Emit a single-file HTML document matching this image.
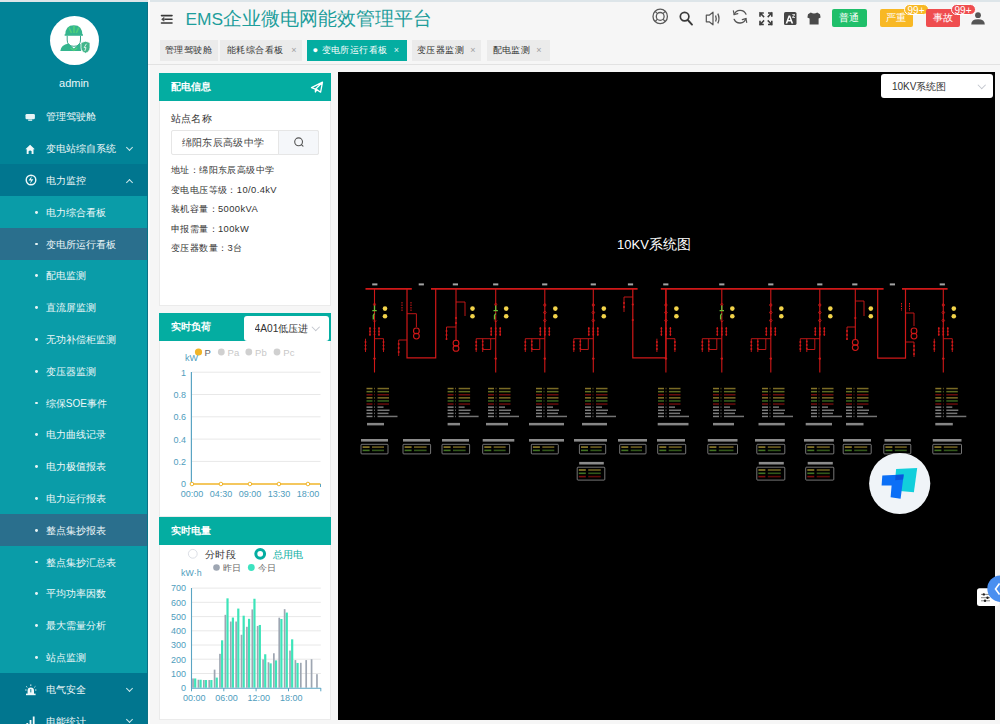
<!DOCTYPE html>
<html><head><meta charset="utf-8">
<style>
*{box-sizing:border-box;margin:0;padding:0}
html,body{width:1000px;height:724px;overflow:hidden;background:#f6f6f6;font-family:"Liberation Sans",sans-serif;position:relative}
.abs{position:absolute}
#top{left:0;top:0;width:1000px;height:2px;background:#dde5e9}
#side{left:0;top:0;width:148px;height:724px;background:#018397;color:#e9f6f7;overflow:hidden}
#side .edge{position:absolute;right:0;top:0;width:1.5px;height:100%;background:#0b7286}
.avatar{left:49.5px;top:15.5px;width:49.5px;height:49.5px;border-radius:50%;background:#fff}
.admin{left:0;width:148px;top:76.5px;text-align:center;font-size:11px;color:#eaf6f7}
.mi{position:absolute;left:0;width:148px;height:31.8px;font-size:10px;line-height:31.8px;color:#eef8f9;font-weight:500}
.mi .t{position:absolute;left:45.8px;top:0.8px}
.mi svg{position:absolute;left:24px;top:10px}
.mi .chev{position:absolute;left:127px;top:12.5px;width:5px;height:5px;border-right:1.2px solid #cfe9ec;border-bottom:1.2px solid #cfe9ec;transform:rotate(45deg)}
.mi .chev.up{transform:rotate(-135deg);top:15.5px}
.sub{background:#0a9ca8}
.sub .dot{position:absolute;left:35.2px;top:14.9px;width:2.8px;height:2.8px;border-radius:50%;background:#e6f4f5}
.sub.act{background:#2a6f8d}
.grp{background:#01768f}
#hdr{left:148px;top:2px;width:852px;height:62px;background:#f6f6f6}
#wl{left:148px;top:0;width:2px;height:724px;background:#fcfcfc}
.title{left:185.5px;top:6px;font-size:18.7px;color:#1e9e9c;white-space:nowrap}
.tab{position:absolute;top:40px;height:20.5px;background:#ebebeb;font-size:9.3px;letter-spacing:0.45px;font-weight:500;line-height:20.5px;color:#333;padding-left:5px;white-space:nowrap}
.tab .x{position:absolute;right:5px;top:0;font-size:9px;color:#a0a0a0}
.tab.on{background:#04ada1;color:#fff}
.tab.on .x{color:#e0f5f3}
#sep{left:148px;top:63.5px;width:852px;height:1px;background:#e2e2e2}
.panel{position:absolute;left:159px;width:171.5px;background:#fff;border:1px solid #ebebeb}
.ph{position:absolute;left:-1px;top:-1px;width:171.5px;height:28px;background:#04ada1;color:#fff;font-weight:bold;font-size:10px;line-height:28px;padding-left:11.5px}
.lbl{position:absolute;font-size:9.4px;color:#333;white-space:nowrap;font-weight:500;letter-spacing:0.4px}
#black{left:337.5px;top:72px;width:657px;height:647.5px;background:#000}
.hic{position:absolute;top:8px}
.btn{position:absolute;top:9px;height:18px;border-radius:2px;color:#fff;font-size:10px;font-weight:500;line-height:18px;text-align:center}
.badge{position:absolute;top:3.5px;height:11px;border-radius:6px;color:#fff;font-size:10px;line-height:11px;text-align:center;border:1px solid #fff}
</style></head><body>
<div id="side" class="abs">
  <div class="abs avatar"></div>
<svg class="abs" style="left:40px;top:10px" width="70" height="60" viewBox="0 0 70 60">
  <path d="M25.2 25.2Q25.2 15.3 33.9 15.3Q42.4 15.3 42.4 25.2Z" fill="#35b58e"/>
  <path d="M29 17.5L31.5 23M34 16V23M38.8 17.5L36.3 23" stroke="#4fd07a" stroke-width="1.6"/>
  <path d="M24.6 25H43" stroke="#35b58e" stroke-width="1.4"/>
  <path d="M27.2 25.8V30Q27.2 36.3 33.9 36.3Q40.5 36.3 40.5 30V25.8" fill="none" stroke="#3aa58a" stroke-width="1"/>
  <path d="M20.3 41Q21 35 28.5 33.6L33.9 38.5L39.3 33.6Q41.5 34 42.5 35.5L41 41Z" fill="#35b58e"/>
  <path d="M30.5 38L33.9 40.5L37.3 38" stroke="#4fd07a" stroke-width="1.2" fill="none"/>
  <path d="M41 32.6L45.6 31.2L50 32.6V37.6Q50 41.5 45.6 43.3Q41 41.5 41 37.6Z" fill="#43b58a" stroke="#fff" stroke-width="0.8"/>
  <path d="M46.4 33.8L44.2 37.6H46L44.8 41" stroke="#fff" stroke-width="0.8" fill="none"/>
</svg>
  <div class="abs admin">admin</div>
  <div class="mi" style="top:100.6px"><svg style="position:absolute;left:25px;top:12.5px" width="11" height="9" viewBox="0 0 11 9"><rect x="0.5" y="1" width="9.4" height="5.2" rx="1.2" fill="#e6f4f6"/><rect x="3.2" y="6.5" width="4" height="1.3" fill="#e6f4f6"/></svg><div class="t">管理驾驶舱</div></div>
  <div class="mi" style="top:132.4px"><svg style="position:absolute;left:25px;top:11.5px" width="11" height="11" viewBox="0 0 11 11"><path d="M5.1 0.8L0.4 5.2H1.7V10H8.5V5.2H9.8Z" fill="#f0f8f9"/><path d="M3.6 10V7.2Q5.1 5.6 6.6 7.2V10Z" fill="#018397"/></svg><div class="t">变电站综自系统</div><div class="chev"></div></div>
  <div class="mi grp" style="top:164.2px"><svg style="position:absolute;left:24.5px;top:10px" width="12" height="12" viewBox="0 0 12 12"><circle cx="6" cy="6" r="4.8" fill="none" stroke="#eef8f9" stroke-width="1.4"/><path d="M6.8 2L3.6 6.6H6L5 10L8.4 5.2H6Z" fill="#eef8f9"/></svg><div class="t">电力监控</div><div class="chev up"></div></div>
  <div class="mi sub" style="top:196.0px"><div class="dot"></div><div class="t">电力综合看板</div></div>
  <div class="mi sub act" style="top:227.8px"><div class="dot"></div><div class="t">变电所运行看板</div></div>
  <div class="mi sub" style="top:259.6px"><div class="dot"></div><div class="t">配电监测</div></div>
  <div class="mi sub" style="top:291.4px"><div class="dot"></div><div class="t">直流屏监测</div></div>
  <div class="mi sub" style="top:323.2px"><div class="dot"></div><div class="t">无功补偿柜监测</div></div>
  <div class="mi sub" style="top:355.0px"><div class="dot"></div><div class="t">变压器监测</div></div>
  <div class="mi sub" style="top:386.8px"><div class="dot"></div><div class="t">综保SOE事件</div></div>
  <div class="mi sub" style="top:418.6px"><div class="dot"></div><div class="t">电力曲线记录</div></div>
  <div class="mi sub" style="top:450.4px"><div class="dot"></div><div class="t">电力极值报表</div></div>
  <div class="mi sub" style="top:482.2px"><div class="dot"></div><div class="t">电力运行报表</div></div>
  <div class="mi sub act" style="top:514.0px"><div class="dot"></div><div class="t">整点集抄报表</div></div>
  <div class="mi sub" style="top:545.8px"><div class="dot"></div><div class="t">整点集抄汇总表</div></div>
  <div class="mi sub" style="top:577.6px"><div class="dot"></div><div class="t">平均功率因数</div></div>
  <div class="mi sub" style="top:609.4px"><div class="dot"></div><div class="t">最大需量分析</div></div>
  <div class="mi sub" style="top:641.2px"><div class="dot"></div><div class="t">站点监测</div></div>
  <div class="mi grp" style="top:673.0px"><svg style="position:absolute;left:24.5px;top:10.5px" width="12" height="12" viewBox="0 0 12 12"><path d="M2.6 10V6.5Q2.6 3.4 5.8 3.4Q9 3.4 9 6.5V10Z" fill="#f0f8f9"/><rect x="1" y="9.6" width="9.6" height="1.6" fill="#f0f8f9"/><path d="M5.8 0.4V2M1.2 2.4L2.3 3.4M10.4 2.4L9.3 3.4M0.2 6H1.6M10 6H11.4" stroke="#f0f8f9" stroke-width="0.9"/><path d="M5.8 5V8.4" stroke="#01768f" stroke-width="0.9"/></svg><div class="t">电气安全</div><div class="chev"></div></div>
  <div class="mi grp" style="top:704.8px"><svg style="position:absolute;left:26px;top:10.5px" width="11" height="12" viewBox="0 0 11 12"><rect x="0.4" y="8" width="1.8" height="4" fill="#f0f8f9"/><rect x="3.6" y="5" width="1.8" height="7" fill="#f0f8f9"/><rect x="6.8" y="1.5" width="1.8" height="10.5" fill="#f0f8f9"/></svg><div class="t">电能统计</div><div class="chev"></div></div>
  <div class="edge"></div>
</div>
<div id="top" class="abs"></div>
<div id="hdr" class="abs"></div><div id="wl" class="abs"></div>
<div class="abs title"><span style="font-size:17.4px">EMS</span>企业微电网能效管理平台</div>
<div class="tab" style="left:160px;width:57.5px">管理驾驶舱</div>
<div class="tab" style="left:220px;width:82px;padding-left:7px">能耗综合看板<span class="x">×</span></div>
<div class="tab on" style="left:306.5px;width:100px;padding-left:6px">● 变电所运行看板<span class="x" style="right:7px">×</span></div>
<div class="tab" style="left:412px;width:69px">变压器监测<span class="x">×</span></div>
<div class="tab" style="left:487px;width:63px;padding-left:5.5px">配电监测<span class="x" style="right:8px">×</span></div>
<div id="sep" class="abs"></div>


<svg class="abs" style="left:0;top:0" width="1000" height="40" viewBox="0 0 1000 40">
 <g fill="none" stroke="#383838" stroke-linecap="round">
  <!-- hamburger -->
  <path d="M161.5 15.6H172M165 19.3H172M161.5 23H172" stroke-width="1.6"/>
  <path d="M163.8 17.6L161.6 19.3L163.8 21Z" fill="#383838" stroke-width="0.6"/>
 </g>
 <g fill="none" stroke="#5a5a5a">
  <circle cx="660.2" cy="16.4" r="7.2" stroke-width="1.3"/>
  <circle cx="660.2" cy="16.4" r="3.9" stroke-width="1.3"/>
  <path d="M655.1 11.3L657.5 13.7M665.3 11.3L662.9 13.7M655.1 21.5L657.5 19.1M665.3 21.5L662.9 19.1" stroke-width="1.2"/>
 </g>
 <g fill="none" stroke="#3a3a3a" stroke-linecap="round">
  <circle cx="684.6" cy="16.6" r="4.3" stroke-width="1.7"/>
  <path d="M687.8 20L692 24.6" stroke-width="1.9"/>
 </g>
 <g fill="none" stroke="#555" stroke-width="1.2" stroke-linejoin="round">
  <path d="M706.3 15.2H709.2L713 12.2V24.8L709.2 21.8H706.3Z"/>
  <path d="M715.6 15.4Q716.8 18.5 715.6 21.6" stroke-width="1.3"/>
  <path d="M717.8 13.6Q720.2 18.5 717.8 23.4" stroke-width="1.3"/>
 </g>
 <g fill="none" stroke="#555" stroke-width="1.3" stroke-linecap="round">
  <path d="M734.2 14.6A6.3 6.3 0 0 1 746 14.2"/>
  <path d="M745.9 18.6A6.3 6.3 0 0 1 734.2 19.4"/>
  <path d="M733.4 10.8L734.2 14.6L737.8 13.6" stroke-width="1.2"/>
  <path d="M746.7 22.3L745.9 18.6L742.3 19.6" stroke-width="1.2"/>
 </g>
 <g fill="none" stroke="#3d3d3d" stroke-width="1.6" stroke-linecap="square">
  <path d="M760 13L763.5 16.5M760 13V16M760 13H763"/>
  <path d="M771.8 13L768.3 16.5M771.8 13V16M771.8 13H768.8"/>
  <path d="M760 24.5L763.5 21M760 24.5V21.5M760 24.5H763"/>
  <path d="M771.8 24.5L768.3 21M771.8 24.5V21.5M771.8 24.5H768.8"/>
 </g>
 <rect x="784" y="12" width="12.5" height="13" rx="1.6" fill="#454545"/>
 <path d="M785.6 23.4L788.6 15.4H790.2L793.2 23.4H791.5L790.8 21.4H788L787.3 23.4ZM788.5 19.9H790.3L789.4 17.3Z" fill="#fff"/>
 <path d="M792.3 14.3H795V15L793.2 17H795V17.7H792.2V17L794 15H792.3Z" fill="#fff"/>
 <path d="M810.8 12.6L808 14.2L807.4 17.6L809.6 18.6V24.6H818.6V18.6L820.6 17.6L820 14.2L817.2 12.6Q814 14.6 810.8 12.6Z" fill="#4a4a4a"/>
 <circle cx="978" cy="15.2" r="2.9" fill="#555"/>
 <path d="M971.2 24.4Q971.2 19.2 978 19.2Q984.8 19.2 984.8 24.4Z" fill="#555"/>
</svg>
<div class="btn" style="left:831.5px;width:35px;background:#1fbf6a">普通</div>
<div class="btn" style="left:879.5px;width:33px;background:#f8b824">严重</div>
<div class="badge" style="left:903.5px;width:25px;background:#f8b824">99+</div>
<div class="btn" style="left:926px;width:34px;background:#ef4d4f">事故</div>
<div class="badge" style="left:950.5px;width:25px;background:#ef4d4f">99+</div>

<div class="panel" style="top:72.5px;height:233px"><div class="ph">配电信息<svg style="position:absolute;left:151px;top:7px" width="14" height="14" viewBox="0 0 14 14"><path d="M1.5 7.6L12.5 2.2L10.6 12.2L6.8 9.6L5.4 12V9.2L1.5 7.6ZM5.4 9.2L12.5 2.2" fill="none" stroke="#fff" stroke-width="1.3" stroke-linejoin="round"/></svg></div>
 <div class="lbl" style="left:10.5px;top:38.5px;font-size:10px">站点名称</div>
 <div style="position:absolute;left:11px;top:56.5px;width:148px;height:25px;border:1px solid #e6e6e6;border-radius:2px;background:#fff"></div>
 <div style="position:absolute;left:117.5px;top:56.5px;width:41.5px;height:25px;border:1px solid #e6e6e6;border-radius:0 2px 2px 0;background:#f5f7fa"></div>
 <svg style="position:absolute;left:132px;top:61px" width="14" height="14" viewBox="0 0 14 14"><circle cx="6.6" cy="6.8" r="3.9" fill="none" stroke="#555" stroke-width="1.1"/><path d="M9.4 9.6L11 11.2" stroke="#555" stroke-width="1.1" stroke-linecap="round"/></svg>
 <div class="lbl" style="left:21.5px;top:62.5px;font-size:10.2px;color:#444">绵阳东辰高级中学</div>
 <div class="lbl" style="left:11px;top:90.5px">地址：绵阳东辰高级中学</div>
 <div class="lbl" style="left:11px;top:110px">变电电压等级：10/0.4kV</div>
 <div class="lbl" style="left:11px;top:129.5px">装机容量：5000kVA</div>
 <div class="lbl" style="left:11px;top:149px">申报需量：100kW</div>
 <div class="lbl" style="left:11px;top:168.5px">变压器数量：3台</div>
</div>
<div class="panel" style="top:313px;height:203.5px"><div class="ph">实时负荷</div>
 <div style="position:absolute;left:84px;top:1.5px;width:85px;height:25.5px;background:#fff;border-radius:3px;overflow:hidden">
  <div style="position:absolute;left:10.5px;top:6px;width:53px;overflow:hidden;white-space:nowrap;font-size:10.2px;color:#333;font-weight:500">4A01低压进线</div>
  <div style="position:absolute;left:69px;top:8px;width:5.5px;height:5.5px;border-right:1px solid #c0c4cc;border-bottom:1px solid #c0c4cc;transform:rotate(45deg)"></div>
 </div>
</div>
<div class="panel" style="top:516.5px;height:203.5px"><div class="ph">实时电量</div></div>

<svg class="abs" style="left:0;top:0" width="340" height="724" viewBox="0 0 340 724">
<circle cx="198.5" cy="352" r="3.6" fill="#f0b429"/><text x="204.5" y="355.5" font-family="Liberation Sans" font-size="9.5" fill="#666">P</text>
<circle cx="221.3" cy="352" r="3.4" fill="#d0d0d0"/><text x="227.60000000000002" y="355.5" font-family="Liberation Sans" font-size="9.5" fill="#c8c8c8">Pa</text>
<circle cx="248.8" cy="352" r="3.4" fill="#d0d0d0"/><text x="255.10000000000002" y="355.5" font-family="Liberation Sans" font-size="9.5" fill="#c8c8c8">Pb</text>
<circle cx="277" cy="352" r="3.4" fill="#d0d0d0"/><text x="283.3" y="355.5" font-family="Liberation Sans" font-size="9.5" fill="#c8c8c8">Pc</text>
<text x="185" y="360.5" font-family="Liberation Sans" font-size="9" fill="#4f9dbd">kW</text>
<path d="M192 372.2H320.5" stroke="#e8e8e8" stroke-width="1"/>
<text x="186" y="375.6" text-anchor="end" font-family="Liberation Sans" font-size="9" fill="#4f9dbd">1</text>
<path d="M192 394.5H320.5" stroke="#e8e8e8" stroke-width="1"/>
<text x="186" y="397.9" text-anchor="end" font-family="Liberation Sans" font-size="9" fill="#4f9dbd">0.8</text>
<path d="M192 416.8H320.5" stroke="#e8e8e8" stroke-width="1"/>
<text x="186" y="420.2" text-anchor="end" font-family="Liberation Sans" font-size="9" fill="#4f9dbd">0.6</text>
<path d="M192 439.1H320.5" stroke="#e8e8e8" stroke-width="1"/>
<text x="186" y="442.5" text-anchor="end" font-family="Liberation Sans" font-size="9" fill="#4f9dbd">0.4</text>
<path d="M192 461.4H320.5" stroke="#e8e8e8" stroke-width="1"/>
<text x="186" y="464.8" text-anchor="end" font-family="Liberation Sans" font-size="9" fill="#4f9dbd">0.2</text>
<text x="186" y="487.4" text-anchor="end" font-family="Liberation Sans" font-size="9" fill="#4f9dbd">0</text>
<path d="M191.4 372V484.5" stroke="#5aa4c3" stroke-width="1.2"/>
<path d="M191.4 484H320.5" stroke="#f0b429" stroke-width="1.6"/><path d="M320.5 484V487" stroke="#5aa4c3" stroke-width="1"/>
<circle cx="191.9" cy="484" r="1.8" fill="#fff" stroke="#f0b429" stroke-width="1"/>
<text x="191.9" y="496.5" text-anchor="middle" font-family="Liberation Sans" font-size="9" fill="#4f9dbd">00:00</text>
<circle cx="220.9" cy="484" r="1.8" fill="#fff" stroke="#f0b429" stroke-width="1"/>
<text x="220.9" y="496.5" text-anchor="middle" font-family="Liberation Sans" font-size="9" fill="#4f9dbd">04:30</text>
<circle cx="249.9" cy="484" r="1.8" fill="#fff" stroke="#f0b429" stroke-width="1"/>
<text x="249.9" y="496.5" text-anchor="middle" font-family="Liberation Sans" font-size="9" fill="#4f9dbd">09:00</text>
<circle cx="278.9" cy="484" r="1.8" fill="#fff" stroke="#f0b429" stroke-width="1"/>
<text x="278.9" y="496.5" text-anchor="middle" font-family="Liberation Sans" font-size="9" fill="#4f9dbd">13:30</text>
<circle cx="307.9" cy="484" r="1.8" fill="#fff" stroke="#f0b429" stroke-width="1"/>
<text x="307.9" y="496.5" text-anchor="middle" font-family="Liberation Sans" font-size="9" fill="#4f9dbd">18:00</text>
<circle cx="192.8" cy="553.8" r="4.4" fill="#fff" stroke="#dcdfe6" stroke-width="1"/>
<circle cx="260.2" cy="553.8" r="4.4" fill="#fff" stroke="#04ada1" stroke-width="3"/>
<text x="205" y="557.6" font-size="10" fill="#333" font-weight="500" letter-spacing="0.3">分时段</text>
<text x="272.5" y="557.6" font-size="10" fill="#04ada1" font-weight="500" letter-spacing="0.3">总用电</text>
<circle cx="216.5" cy="567.5" r="3.3" fill="#9ea6b2"/><text x="222.5" y="571" font-size="9.3" fill="#666">昨日</text>
<circle cx="251.3" cy="567.5" r="3.4" fill="#3de3c0"/><text x="257.5" y="571" font-size="9.3" fill="#666">今日</text>
<text x="181" y="576.3" font-family="Liberation Sans" font-size="8.8" fill="#4f9dbd">kW·h</text>
<text x="186" y="691.0" text-anchor="end" font-family="Liberation Sans" font-size="9" fill="#4f9dbd">0</text>
<path d="M192 673.5H320.8" stroke="#e8e8e8" stroke-width="1"/>
<text x="186" y="676.8" text-anchor="end" font-family="Liberation Sans" font-size="9" fill="#4f9dbd">100</text>
<path d="M192 659.2H320.8" stroke="#e8e8e8" stroke-width="1"/>
<text x="186" y="662.5" text-anchor="end" font-family="Liberation Sans" font-size="9" fill="#4f9dbd">200</text>
<path d="M192 645.0H320.8" stroke="#e8e8e8" stroke-width="1"/>
<text x="186" y="648.3" text-anchor="end" font-family="Liberation Sans" font-size="9" fill="#4f9dbd">300</text>
<path d="M192 630.8H320.8" stroke="#e8e8e8" stroke-width="1"/>
<text x="186" y="634.1" text-anchor="end" font-family="Liberation Sans" font-size="9" fill="#4f9dbd">400</text>
<path d="M192 616.6H320.8" stroke="#e8e8e8" stroke-width="1"/>
<text x="186" y="619.9" text-anchor="end" font-family="Liberation Sans" font-size="9" fill="#4f9dbd">500</text>
<path d="M192 602.3H320.8" stroke="#e8e8e8" stroke-width="1"/>
<text x="186" y="605.6" text-anchor="end" font-family="Liberation Sans" font-size="9" fill="#4f9dbd">600</text>
<path d="M192 588.1H320.8" stroke="#e8e8e8" stroke-width="1"/>
<text x="186" y="591.4" text-anchor="end" font-family="Liberation Sans" font-size="9" fill="#4f9dbd">700</text>
<rect x="192.19" y="678.45" width="1.7" height="9.25" fill="#9ea6b2"/>
<rect x="194.09" y="678.45" width="2.2" height="9.25" fill="#3de4b9"/>
<rect x="197.58" y="679.73" width="1.7" height="7.97" fill="#9ea6b2"/>
<rect x="199.48" y="679.73" width="2.2" height="7.97" fill="#3de4b9"/>
<rect x="202.97" y="680.02" width="1.7" height="7.68" fill="#9ea6b2"/>
<rect x="204.87" y="680.02" width="2.2" height="7.68" fill="#3de4b9"/>
<rect x="208.36" y="680.02" width="1.7" height="7.68" fill="#9ea6b2"/>
<rect x="210.26" y="680.02" width="2.2" height="7.68" fill="#3de4b9"/>
<rect x="213.74" y="669.63" width="1.7" height="18.07" fill="#9ea6b2"/>
<rect x="215.64" y="677.60" width="2.2" height="10.10" fill="#3de4b9"/>
<rect x="219.13" y="653.83" width="1.7" height="33.87" fill="#9ea6b2"/>
<rect x="221.03" y="640.31" width="2.2" height="47.39" fill="#3de4b9"/>
<rect x="224.52" y="614.84" width="1.7" height="72.86" fill="#9ea6b2"/>
<rect x="226.42" y="598.34" width="2.2" height="89.36" fill="#3de4b9"/>
<rect x="229.91" y="621.53" width="1.7" height="66.17" fill="#9ea6b2"/>
<rect x="231.81" y="617.55" width="2.2" height="70.15" fill="#3de4b9"/>
<rect x="235.29" y="621.53" width="1.7" height="66.17" fill="#9ea6b2"/>
<rect x="237.19" y="608.58" width="2.2" height="79.12" fill="#3de4b9"/>
<rect x="240.68" y="634.76" width="1.7" height="52.94" fill="#9ea6b2"/>
<rect x="242.58" y="615.70" width="2.2" height="72.00" fill="#3de4b9"/>
<rect x="246.07" y="626.80" width="1.7" height="60.90" fill="#9ea6b2"/>
<rect x="247.97" y="618.83" width="2.2" height="68.87" fill="#3de4b9"/>
<rect x="251.46" y="609.44" width="1.7" height="78.27" fill="#9ea6b2"/>
<rect x="253.36" y="598.76" width="2.2" height="88.94" fill="#3de4b9"/>
<rect x="256.84" y="625.94" width="1.7" height="61.76" fill="#9ea6b2"/>
<rect x="258.74" y="624.95" width="2.2" height="62.75" fill="#3de4b9"/>
<rect x="262.23" y="659.38" width="1.7" height="28.32" fill="#9ea6b2"/>
<rect x="264.13" y="654.26" width="2.2" height="33.44" fill="#3de4b9"/>
<rect x="267.62" y="662.23" width="1.7" height="25.47" fill="#9ea6b2"/>
<rect x="269.52" y="663.37" width="2.2" height="24.33" fill="#3de4b9"/>
<rect x="273.01" y="653.26" width="1.7" height="34.44" fill="#9ea6b2"/>
<rect x="274.91" y="660.38" width="2.2" height="27.32" fill="#3de4b9"/>
<rect x="278.39" y="617.69" width="1.7" height="70.01" fill="#9ea6b2"/>
<rect x="280.29" y="618.97" width="2.2" height="68.73" fill="#3de4b9"/>
<rect x="283.78" y="609.15" width="1.7" height="78.55" fill="#9ea6b2"/>
<rect x="285.68" y="612.57" width="2.2" height="75.13" fill="#3de4b9"/>
<rect x="289.17" y="650.56" width="1.7" height="37.14" fill="#9ea6b2"/>
<rect x="291.07" y="639.32" width="2.2" height="48.38" fill="#3de4b9"/>
<rect x="294.56" y="660.09" width="1.7" height="27.61" fill="#9ea6b2"/>
<rect x="296.46" y="662.94" width="2.2" height="24.76" fill="#3de4b9"/>
<rect x="299.94" y="662.80" width="1.7" height="24.90" fill="#9ea6b2"/>
<rect x="305.33" y="660.09" width="1.7" height="27.61" fill="#9ea6b2"/>
<rect x="310.72" y="659.24" width="1.7" height="28.46" fill="#9ea6b2"/>
<rect x="316.11" y="674.18" width="1.7" height="13.52" fill="#9ea6b2"/>
<path d="M191.5 588V688.3" stroke="#5aa4c3" stroke-width="1.1"/>
<path d="M191.5 688.2H320.8" stroke="#5aa4c3" stroke-width="1.1"/>
<path d="M191.5 688V691.3" stroke="#5aa4c3" stroke-width="1"/>
<path d="M223.8 688V691.3" stroke="#5aa4c3" stroke-width="1"/>
<path d="M256.1 688V691.3" stroke="#5aa4c3" stroke-width="1"/>
<path d="M288.5 688V691.3" stroke="#5aa4c3" stroke-width="1"/>
<path d="M320.8 688V691.3" stroke="#5aa4c3" stroke-width="1"/>
<text x="194.2" y="701" text-anchor="middle" font-family="Liberation Sans" font-size="9" fill="#4f9dbd">00:00</text>
<text x="226.5" y="701" text-anchor="middle" font-family="Liberation Sans" font-size="9" fill="#4f9dbd">06:00</text>
<text x="258.8" y="701" text-anchor="middle" font-family="Liberation Sans" font-size="9" fill="#4f9dbd">12:00</text>
<text x="291.2" y="701" text-anchor="middle" font-family="Liberation Sans" font-size="9" fill="#4f9dbd">18:00</text>
</svg>
<div id="black" class="abs"></div>
<div class="abs" style="left:617px;top:235.5px;font-size:14px;color:#fff;white-space:nowrap;font-weight:500"><span style="font-size:13px">10KV</span>系统图</div>
<div class="abs" style="left:881px;top:74px;width:112px;height:24px;background:#fff;border-radius:3px"></div>
<div class="abs" style="left:892px;top:80px;font-size:10px;color:#333;white-space:nowrap;font-weight:500">10KV系统图</div>
<div class="abs" style="left:978.5px;top:82px;width:5.5px;height:5.5px;border-right:1px solid #c0c4cc;border-bottom:1px solid #c0c4cc;transform:rotate(45deg)"></div>
<!--DIAG--><svg class="abs" style="left:0;top:0" width="1000" height="724" viewBox="0 0 1000 724">
<path d="M365.5 288.9H411.8" stroke="#d01818" stroke-width="1.6"/>
<path d="M431 288.9H637.6" stroke="#d01818" stroke-width="1.6"/>
<path d="M660.8 288.9H883.6" stroke="#d01818" stroke-width="1.6"/>
<path d="M902 288.9H947.6" stroke="#d01818" stroke-width="1.6"/>
<rect x="372.2" y="283.4" width="5.2" height="2" fill="#e8e8e8" opacity="0.7"/>
<rect x="418.7" y="283.4" width="5.2" height="2" fill="#e8e8e8" opacity="0.7"/>
<rect x="452.8" y="283.4" width="5.2" height="2" fill="#e8e8e8" opacity="0.7"/>
<rect x="493.1" y="283.4" width="5.2" height="2" fill="#e8e8e8" opacity="0.7"/>
<rect x="542.1" y="283.4" width="5.2" height="2" fill="#e8e8e8" opacity="0.7"/>
<rect x="590.7" y="283.4" width="5.2" height="2" fill="#e8e8e8" opacity="0.7"/>
<rect x="627.9" y="283.4" width="5.2" height="2" fill="#e8e8e8" opacity="0.7"/>
<rect x="663.2" y="283.4" width="5.2" height="2" fill="#e8e8e8" opacity="0.7"/>
<rect x="719.2" y="283.4" width="5.2" height="2" fill="#e8e8e8" opacity="0.7"/>
<rect x="768.2" y="283.4" width="5.2" height="2" fill="#e8e8e8" opacity="0.7"/>
<rect x="817.2" y="283.4" width="5.2" height="2" fill="#e8e8e8" opacity="0.7"/>
<rect x="852.2" y="283.4" width="5.2" height="2" fill="#e8e8e8" opacity="0.7"/>
<rect x="889.8" y="283.4" width="5.2" height="2" fill="#e8e8e8" opacity="0.7"/>
<rect x="939.7" y="283.4" width="5.2" height="2" fill="#e8e8e8" opacity="0.7"/>
<path d="M374.5 289V372.5" stroke="#d01818" stroke-width="1.1"/>
<circle cx="374.5" cy="304.5" r="1.1" fill="none" stroke="#d01818" stroke-width="0.8"/>
<path d="M374.5 305.5V310.5M372.3 310.6H376.7M374.5 313.5L373.3 315.5V319.5" stroke="#6cbf3a" stroke-width="1.3"/>
<path d="M373.1 320.5L374.5 322L375.9 320.5" stroke="#d01818" stroke-width="0.9" fill="none"/>
<circle cx="385.0" cy="308.6" r="2.3" fill="#f2d34a"/><circle cx="385.0" cy="316.2" r="2.3" fill="#f2d34a"/>
<path d="M370.0 327V336" stroke="#d01818" stroke-width="0.9"/>
<circle cx="370.0" cy="328.5" r="0.9" fill="#d01818"/>
<circle cx="370.0" cy="331.5" r="0.9" fill="#d01818"/>
<circle cx="370.0" cy="334.5" r="0.9" fill="#d01818"/>
<path d="M374.5 327V336" stroke="#d01818" stroke-width="0.9"/>
<circle cx="374.5" cy="328.5" r="0.9" fill="#d01818"/>
<circle cx="374.5" cy="331.5" r="0.9" fill="#d01818"/>
<circle cx="374.5" cy="334.5" r="0.9" fill="#d01818"/>
<path d="M379.0 327V336" stroke="#d01818" stroke-width="0.9"/>
<circle cx="379.0" cy="328.5" r="0.9" fill="#d01818"/>
<circle cx="379.0" cy="331.5" r="0.9" fill="#d01818"/>
<circle cx="379.0" cy="334.5" r="0.9" fill="#d01818"/>
<path d="M374.5 338.7H383.5V352M365.5 338.7V352" stroke="#d01818" stroke-width="0.9" fill="none"/>
<circle cx="383.5" cy="342" r="1" fill="#d01818"/><circle cx="365.5" cy="342" r="1" fill="#d01818"/>
<circle cx="383.5" cy="345.5" r="1" fill="#d01818"/><circle cx="365.5" cy="345.5" r="1" fill="#d01818"/>
<circle cx="383.5" cy="349" r="1" fill="#d01818"/><circle cx="365.5" cy="349" r="1" fill="#d01818"/>
<circle cx="374.5" cy="358.6" r="1.2" fill="#d01818"/>
<path d="M495.7 289V372.5" stroke="#d01818" stroke-width="1.1"/>
<circle cx="495.7" cy="304.5" r="1.1" fill="none" stroke="#d01818" stroke-width="0.8"/>
<path d="M495.7 305.5V310.5M493.5 310.6H497.9M495.7 313.5L494.5 315.5V319.5" stroke="#6cbf3a" stroke-width="1.3"/>
<path d="M494.3 320.5L495.7 322L497.09999999999997 320.5" stroke="#d01818" stroke-width="0.9" fill="none"/>
<circle cx="506.2" cy="308.6" r="2.3" fill="#f2d34a"/><circle cx="506.2" cy="316.2" r="2.3" fill="#f2d34a"/>
<path d="M491.2 327V336" stroke="#d01818" stroke-width="0.9"/>
<circle cx="491.2" cy="328.5" r="0.9" fill="#d01818"/>
<circle cx="491.2" cy="331.5" r="0.9" fill="#d01818"/>
<circle cx="491.2" cy="334.5" r="0.9" fill="#d01818"/>
<path d="M495.7 327V336" stroke="#d01818" stroke-width="0.9"/>
<circle cx="495.7" cy="328.5" r="0.9" fill="#d01818"/>
<circle cx="495.7" cy="331.5" r="0.9" fill="#d01818"/>
<circle cx="495.7" cy="334.5" r="0.9" fill="#d01818"/>
<path d="M500.2 327V336" stroke="#d01818" stroke-width="0.9"/>
<circle cx="500.2" cy="328.5" r="0.9" fill="#d01818"/>
<circle cx="500.2" cy="331.5" r="0.9" fill="#d01818"/>
<circle cx="500.2" cy="334.5" r="0.9" fill="#d01818"/>
<path d="M495.7 338.7H476.2V352M482.7 338.7V352M482.7 349.5H490.7V338.7" stroke="#d01818" stroke-width="0.9" fill="none"/>
<circle cx="476.2" cy="342" r="1" fill="#d01818"/><circle cx="482.7" cy="341.5" r="0.9" fill="#d01818"/>
<circle cx="476.2" cy="345.5" r="1" fill="#d01818"/><circle cx="482.7" cy="345.0" r="0.9" fill="#d01818"/>
<circle cx="476.2" cy="349" r="1" fill="#d01818"/><circle cx="482.7" cy="348.5" r="0.9" fill="#d01818"/>
<circle cx="495.7" cy="358.6" r="1.2" fill="#d01818"/>
<path d="M544.8 289V372.5" stroke="#d01818" stroke-width="1.1"/>
<path d="M543.5 305L544.8 303.4L546.0999999999999 305L544.8 306.6Z" fill="none" stroke="#d01818" stroke-width="0.9"/>
<path d="M543.5 312.5L544.8 310.9L546.0999999999999 312.5L544.8 314.1Z" fill="none" stroke="#d01818" stroke-width="0.9"/>
<path d="M543.5 320.5L544.8 318.9L546.0999999999999 320.5L544.8 322.1Z" fill="none" stroke="#d01818" stroke-width="0.9"/>
<circle cx="555.3" cy="308.6" r="2.3" fill="#f2d34a"/><circle cx="555.3" cy="316.2" r="2.3" fill="#f2d34a"/>
<path d="M540.3 327V336" stroke="#d01818" stroke-width="0.9"/>
<circle cx="540.3" cy="328.5" r="0.9" fill="#d01818"/>
<circle cx="540.3" cy="331.5" r="0.9" fill="#d01818"/>
<circle cx="540.3" cy="334.5" r="0.9" fill="#d01818"/>
<path d="M544.8 327V336" stroke="#d01818" stroke-width="0.9"/>
<circle cx="544.8" cy="328.5" r="0.9" fill="#d01818"/>
<circle cx="544.8" cy="331.5" r="0.9" fill="#d01818"/>
<circle cx="544.8" cy="334.5" r="0.9" fill="#d01818"/>
<path d="M549.3 327V336" stroke="#d01818" stroke-width="0.9"/>
<circle cx="549.3" cy="328.5" r="0.9" fill="#d01818"/>
<circle cx="549.3" cy="331.5" r="0.9" fill="#d01818"/>
<circle cx="549.3" cy="334.5" r="0.9" fill="#d01818"/>
<path d="M544.8 338.7H525.3V352M531.8 338.7V352M531.8 349.5H539.8V338.7" stroke="#d01818" stroke-width="0.9" fill="none"/>
<circle cx="525.3" cy="342" r="1" fill="#d01818"/><circle cx="531.8" cy="341.5" r="0.9" fill="#d01818"/>
<circle cx="525.3" cy="345.5" r="1" fill="#d01818"/><circle cx="531.8" cy="345.0" r="0.9" fill="#d01818"/>
<circle cx="525.3" cy="349" r="1" fill="#d01818"/><circle cx="531.8" cy="348.5" r="0.9" fill="#d01818"/>
<circle cx="544.8" cy="358.6" r="1.2" fill="#d01818"/>
<path d="M593.3 289V372.5" stroke="#d01818" stroke-width="1.1"/>
<path d="M592.0 305L593.3 303.4L594.5999999999999 305L593.3 306.6Z" fill="none" stroke="#d01818" stroke-width="0.9"/>
<path d="M592.0 312.5L593.3 310.9L594.5999999999999 312.5L593.3 314.1Z" fill="none" stroke="#d01818" stroke-width="0.9"/>
<path d="M592.0 320.5L593.3 318.9L594.5999999999999 320.5L593.3 322.1Z" fill="none" stroke="#d01818" stroke-width="0.9"/>
<circle cx="603.8" cy="308.6" r="2.3" fill="#f2d34a"/><circle cx="603.8" cy="316.2" r="2.3" fill="#f2d34a"/>
<path d="M588.8 327V336" stroke="#d01818" stroke-width="0.9"/>
<circle cx="588.8" cy="328.5" r="0.9" fill="#d01818"/>
<circle cx="588.8" cy="331.5" r="0.9" fill="#d01818"/>
<circle cx="588.8" cy="334.5" r="0.9" fill="#d01818"/>
<path d="M593.3 327V336" stroke="#d01818" stroke-width="0.9"/>
<circle cx="593.3" cy="328.5" r="0.9" fill="#d01818"/>
<circle cx="593.3" cy="331.5" r="0.9" fill="#d01818"/>
<circle cx="593.3" cy="334.5" r="0.9" fill="#d01818"/>
<path d="M597.8 327V336" stroke="#d01818" stroke-width="0.9"/>
<circle cx="597.8" cy="328.5" r="0.9" fill="#d01818"/>
<circle cx="597.8" cy="331.5" r="0.9" fill="#d01818"/>
<circle cx="597.8" cy="334.5" r="0.9" fill="#d01818"/>
<path d="M593.3 338.7H573.8V352M580.3 338.7V352M580.3 349.5H588.3V338.7" stroke="#d01818" stroke-width="0.9" fill="none"/>
<circle cx="573.8" cy="342" r="1" fill="#d01818"/><circle cx="580.3" cy="341.5" r="0.9" fill="#d01818"/>
<circle cx="573.8" cy="345.5" r="1" fill="#d01818"/><circle cx="580.3" cy="345.0" r="0.9" fill="#d01818"/>
<circle cx="573.8" cy="349" r="1" fill="#d01818"/><circle cx="580.3" cy="348.5" r="0.9" fill="#d01818"/>
<circle cx="593.3" cy="358.6" r="1.2" fill="#d01818"/>
<path d="M665.9 289V372.5" stroke="#d01818" stroke-width="1.1"/>
<path d="M664.6 305L665.9 303.4L667.1999999999999 305L665.9 306.6Z" fill="none" stroke="#d01818" stroke-width="0.9"/>
<path d="M664.6 312.5L665.9 310.9L667.1999999999999 312.5L665.9 314.1Z" fill="none" stroke="#d01818" stroke-width="0.9"/>
<path d="M664.6 320.5L665.9 318.9L667.1999999999999 320.5L665.9 322.1Z" fill="none" stroke="#d01818" stroke-width="0.9"/>
<circle cx="676.4" cy="308.6" r="2.3" fill="#f2d34a"/><circle cx="676.4" cy="316.2" r="2.3" fill="#f2d34a"/>
<path d="M661.4 327V336" stroke="#d01818" stroke-width="0.9"/>
<circle cx="661.4" cy="328.5" r="0.9" fill="#d01818"/>
<circle cx="661.4" cy="331.5" r="0.9" fill="#d01818"/>
<circle cx="661.4" cy="334.5" r="0.9" fill="#d01818"/>
<path d="M665.9 327V336" stroke="#d01818" stroke-width="0.9"/>
<circle cx="665.9" cy="328.5" r="0.9" fill="#d01818"/>
<circle cx="665.9" cy="331.5" r="0.9" fill="#d01818"/>
<circle cx="665.9" cy="334.5" r="0.9" fill="#d01818"/>
<path d="M670.4 327V336" stroke="#d01818" stroke-width="0.9"/>
<circle cx="670.4" cy="328.5" r="0.9" fill="#d01818"/>
<circle cx="670.4" cy="331.5" r="0.9" fill="#d01818"/>
<circle cx="670.4" cy="334.5" r="0.9" fill="#d01818"/>
<path d="M665.9 338.7H674.9V352M656.9 338.7V352" stroke="#d01818" stroke-width="0.9" fill="none"/>
<circle cx="674.9" cy="342" r="1" fill="#d01818"/><circle cx="656.9" cy="342" r="1" fill="#d01818"/>
<circle cx="674.9" cy="345.5" r="1" fill="#d01818"/><circle cx="656.9" cy="345.5" r="1" fill="#d01818"/>
<circle cx="674.9" cy="349" r="1" fill="#d01818"/><circle cx="656.9" cy="349" r="1" fill="#d01818"/>
<circle cx="665.9" cy="358.6" r="1.2" fill="#d01818"/>
<path d="M721.8 289V372.5" stroke="#d01818" stroke-width="1.1"/>
<circle cx="721.8" cy="304.5" r="1.1" fill="none" stroke="#d01818" stroke-width="0.8"/>
<path d="M721.8 305.5V310.5M719.5999999999999 310.6H724.0M721.8 313.5L720.5999999999999 315.5V319.5" stroke="#6cbf3a" stroke-width="1.3"/>
<path d="M720.4 320.5L721.8 322L723.1999999999999 320.5" stroke="#d01818" stroke-width="0.9" fill="none"/>
<circle cx="732.3" cy="308.6" r="2.3" fill="#f2d34a"/><circle cx="732.3" cy="316.2" r="2.3" fill="#f2d34a"/>
<path d="M717.3 327V336" stroke="#d01818" stroke-width="0.9"/>
<circle cx="717.3" cy="328.5" r="0.9" fill="#d01818"/>
<circle cx="717.3" cy="331.5" r="0.9" fill="#d01818"/>
<circle cx="717.3" cy="334.5" r="0.9" fill="#d01818"/>
<path d="M721.8 327V336" stroke="#d01818" stroke-width="0.9"/>
<circle cx="721.8" cy="328.5" r="0.9" fill="#d01818"/>
<circle cx="721.8" cy="331.5" r="0.9" fill="#d01818"/>
<circle cx="721.8" cy="334.5" r="0.9" fill="#d01818"/>
<path d="M726.3 327V336" stroke="#d01818" stroke-width="0.9"/>
<circle cx="726.3" cy="328.5" r="0.9" fill="#d01818"/>
<circle cx="726.3" cy="331.5" r="0.9" fill="#d01818"/>
<circle cx="726.3" cy="334.5" r="0.9" fill="#d01818"/>
<path d="M721.8 338.7H702.3V352M708.8 338.7V352M708.8 349.5H716.8V338.7" stroke="#d01818" stroke-width="0.9" fill="none"/>
<circle cx="702.3" cy="342" r="1" fill="#d01818"/><circle cx="708.8" cy="341.5" r="0.9" fill="#d01818"/>
<circle cx="702.3" cy="345.5" r="1" fill="#d01818"/><circle cx="708.8" cy="345.0" r="0.9" fill="#d01818"/>
<circle cx="702.3" cy="349" r="1" fill="#d01818"/><circle cx="708.8" cy="348.5" r="0.9" fill="#d01818"/>
<circle cx="721.8" cy="358.6" r="1.2" fill="#d01818"/>
<path d="M770.8 289V372.5" stroke="#d01818" stroke-width="1.1"/>
<path d="M769.5 305L770.8 303.4L772.0999999999999 305L770.8 306.6Z" fill="none" stroke="#d01818" stroke-width="0.9"/>
<path d="M769.5 312.5L770.8 310.9L772.0999999999999 312.5L770.8 314.1Z" fill="none" stroke="#d01818" stroke-width="0.9"/>
<path d="M769.5 320.5L770.8 318.9L772.0999999999999 320.5L770.8 322.1Z" fill="none" stroke="#d01818" stroke-width="0.9"/>
<circle cx="781.3" cy="308.6" r="2.3" fill="#f2d34a"/><circle cx="781.3" cy="316.2" r="2.3" fill="#f2d34a"/>
<path d="M766.3 327V336" stroke="#d01818" stroke-width="0.9"/>
<circle cx="766.3" cy="328.5" r="0.9" fill="#d01818"/>
<circle cx="766.3" cy="331.5" r="0.9" fill="#d01818"/>
<circle cx="766.3" cy="334.5" r="0.9" fill="#d01818"/>
<path d="M770.8 327V336" stroke="#d01818" stroke-width="0.9"/>
<circle cx="770.8" cy="328.5" r="0.9" fill="#d01818"/>
<circle cx="770.8" cy="331.5" r="0.9" fill="#d01818"/>
<circle cx="770.8" cy="334.5" r="0.9" fill="#d01818"/>
<path d="M775.3 327V336" stroke="#d01818" stroke-width="0.9"/>
<circle cx="775.3" cy="328.5" r="0.9" fill="#d01818"/>
<circle cx="775.3" cy="331.5" r="0.9" fill="#d01818"/>
<circle cx="775.3" cy="334.5" r="0.9" fill="#d01818"/>
<path d="M770.8 338.7H751.3V352M757.8 338.7V352M757.8 349.5H765.8V338.7" stroke="#d01818" stroke-width="0.9" fill="none"/>
<circle cx="751.3" cy="342" r="1" fill="#d01818"/><circle cx="757.8" cy="341.5" r="0.9" fill="#d01818"/>
<circle cx="751.3" cy="345.5" r="1" fill="#d01818"/><circle cx="757.8" cy="345.0" r="0.9" fill="#d01818"/>
<circle cx="751.3" cy="349" r="1" fill="#d01818"/><circle cx="757.8" cy="348.5" r="0.9" fill="#d01818"/>
<circle cx="770.8" cy="358.6" r="1.2" fill="#d01818"/>
<path d="M819.8 289V372.5" stroke="#d01818" stroke-width="1.1"/>
<path d="M818.5 305L819.8 303.4L821.0999999999999 305L819.8 306.6Z" fill="none" stroke="#d01818" stroke-width="0.9"/>
<path d="M818.5 312.5L819.8 310.9L821.0999999999999 312.5L819.8 314.1Z" fill="none" stroke="#d01818" stroke-width="0.9"/>
<path d="M818.5 320.5L819.8 318.9L821.0999999999999 320.5L819.8 322.1Z" fill="none" stroke="#d01818" stroke-width="0.9"/>
<circle cx="830.3" cy="308.6" r="2.3" fill="#f2d34a"/><circle cx="830.3" cy="316.2" r="2.3" fill="#f2d34a"/>
<path d="M815.3 327V336" stroke="#d01818" stroke-width="0.9"/>
<circle cx="815.3" cy="328.5" r="0.9" fill="#d01818"/>
<circle cx="815.3" cy="331.5" r="0.9" fill="#d01818"/>
<circle cx="815.3" cy="334.5" r="0.9" fill="#d01818"/>
<path d="M819.8 327V336" stroke="#d01818" stroke-width="0.9"/>
<circle cx="819.8" cy="328.5" r="0.9" fill="#d01818"/>
<circle cx="819.8" cy="331.5" r="0.9" fill="#d01818"/>
<circle cx="819.8" cy="334.5" r="0.9" fill="#d01818"/>
<path d="M824.3 327V336" stroke="#d01818" stroke-width="0.9"/>
<circle cx="824.3" cy="328.5" r="0.9" fill="#d01818"/>
<circle cx="824.3" cy="331.5" r="0.9" fill="#d01818"/>
<circle cx="824.3" cy="334.5" r="0.9" fill="#d01818"/>
<path d="M819.8 338.7H800.3V352M806.8 338.7V352M806.8 349.5H814.8V338.7" stroke="#d01818" stroke-width="0.9" fill="none"/>
<circle cx="800.3" cy="342" r="1" fill="#d01818"/><circle cx="806.8" cy="341.5" r="0.9" fill="#d01818"/>
<circle cx="800.3" cy="345.5" r="1" fill="#d01818"/><circle cx="806.8" cy="345.0" r="0.9" fill="#d01818"/>
<circle cx="800.3" cy="349" r="1" fill="#d01818"/><circle cx="806.8" cy="348.5" r="0.9" fill="#d01818"/>
<circle cx="819.8" cy="358.6" r="1.2" fill="#d01818"/>
<path d="M943.3 289V372.5" stroke="#d01818" stroke-width="1.1"/>
<path d="M942.0 305L943.3 303.4L944.5999999999999 305L943.3 306.6Z" fill="none" stroke="#d01818" stroke-width="0.9"/>
<path d="M942.0 312.5L943.3 310.9L944.5999999999999 312.5L943.3 314.1Z" fill="none" stroke="#d01818" stroke-width="0.9"/>
<path d="M942.0 320.5L943.3 318.9L944.5999999999999 320.5L943.3 322.1Z" fill="none" stroke="#d01818" stroke-width="0.9"/>
<circle cx="953.8" cy="308.6" r="2.3" fill="#f2d34a"/><circle cx="953.8" cy="316.2" r="2.3" fill="#f2d34a"/>
<path d="M938.8 327V336" stroke="#d01818" stroke-width="0.9"/>
<circle cx="938.8" cy="328.5" r="0.9" fill="#d01818"/>
<circle cx="938.8" cy="331.5" r="0.9" fill="#d01818"/>
<circle cx="938.8" cy="334.5" r="0.9" fill="#d01818"/>
<path d="M943.3 327V336" stroke="#d01818" stroke-width="0.9"/>
<circle cx="943.3" cy="328.5" r="0.9" fill="#d01818"/>
<circle cx="943.3" cy="331.5" r="0.9" fill="#d01818"/>
<circle cx="943.3" cy="334.5" r="0.9" fill="#d01818"/>
<path d="M947.8 327V336" stroke="#d01818" stroke-width="0.9"/>
<circle cx="947.8" cy="328.5" r="0.9" fill="#d01818"/>
<circle cx="947.8" cy="331.5" r="0.9" fill="#d01818"/>
<circle cx="947.8" cy="334.5" r="0.9" fill="#d01818"/>
<path d="M943.3 338.7H952.3V352M934.3 338.7V352" stroke="#d01818" stroke-width="0.9" fill="none"/>
<circle cx="952.3" cy="342" r="1" fill="#d01818"/><circle cx="934.3" cy="342" r="1" fill="#d01818"/>
<circle cx="952.3" cy="345.5" r="1" fill="#d01818"/><circle cx="934.3" cy="345.5" r="1" fill="#d01818"/>
<circle cx="952.3" cy="349" r="1" fill="#d01818"/><circle cx="934.3" cy="349" r="1" fill="#d01818"/>
<circle cx="943.3" cy="358.6" r="1.2" fill="#d01818"/>
<path d="M407 289V357.9H435.7V289" stroke="#d01818" stroke-width="1.2" fill="none"/>
<path d="M407 313.7H416.4V327" stroke="#d01818" stroke-width="0.9" fill="none"/>
<circle cx="416.4" cy="330.9" r="2.9" fill="none" stroke="#d01818" stroke-width="1.1"/><circle cx="416.4" cy="336.1" r="2.9" fill="none" stroke="#d01818" stroke-width="1.1"/>
<path d="M402 302V311M411 302V311" stroke="#d01818" stroke-width="1" stroke-dasharray="1.5 1"/>
<path d="M407 340H398.7V356" stroke="#d01818" stroke-width="0.9" fill="none"/>
<circle cx="398.7" cy="344" r="1" fill="#d01818"/>
<circle cx="398.7" cy="348" r="1" fill="#d01818"/>
<circle cx="398.7" cy="352" r="1" fill="#d01818"/>
<path d="M456 289V341" stroke="#d01818" stroke-width="1.1"/>
<circle cx="456" cy="343.2" r="2.9" fill="none" stroke="#d01818" stroke-width="1.1"/><circle cx="456" cy="348.40000000000003" r="2.9" fill="none" stroke="#d01818" stroke-width="1.1"/>
<path d="M456 302H465V316" stroke="#d01818" stroke-width="0.9" fill="none"/>
<circle cx="472.5" cy="308.6" r="2.3" fill="#f2d34a"/><circle cx="472.5" cy="316.2" r="2.3" fill="#f2d34a"/>
<path d="M456 327H446.5V340" stroke="#d01818" stroke-width="0.9" fill="none"/>
<circle cx="456" cy="318" r="1.1" fill="#d01818"/>
<circle cx="456" cy="323" r="1.1" fill="#d01818"/>
<circle cx="446.5" cy="331" r="1" fill="#d01818"/>
<circle cx="446.5" cy="335" r="1" fill="#d01818"/>
<circle cx="446.5" cy="339" r="1" fill="#d01818"/>
<path d="M632.8 289V357.9H665.9V289" stroke="#d01818" stroke-width="1.2" fill="none"/>
<path d="M632.8 297H624V312" stroke="#d01818" stroke-width="0.9" fill="none"/>
<circle cx="624" cy="303" r="1" fill="#d01818"/>
<circle cx="624" cy="307" r="1" fill="#d01818"/>
<circle cx="632.8" cy="304.5" r="1.1" fill="#d01818"/>
<circle cx="632.8" cy="320" r="1.1" fill="#d01818"/>
<path d="M855.3 289V340" stroke="#d01818" stroke-width="1.1"/>
<circle cx="855.3" cy="342.4" r="2.9" fill="none" stroke="#d01818" stroke-width="1.1"/><circle cx="855.3" cy="347.6" r="2.9" fill="none" stroke="#d01818" stroke-width="1.1"/>
<path d="M855.3 301H864V316" stroke="#d01818" stroke-width="0.9" fill="none"/>
<circle cx="870.8" cy="308.6" r="2.3" fill="#f2d34a"/><circle cx="870.8" cy="316.3" r="2.3" fill="#f2d34a"/>
<path d="M855.3 327H847V340" stroke="#d01818" stroke-width="0.9" fill="none"/>
<circle cx="847" cy="331" r="1" fill="#d01818"/>
<circle cx="847" cy="335" r="1" fill="#d01818"/>
<circle cx="847" cy="339" r="1" fill="#d01818"/>
<circle cx="855.3" cy="318" r="1.1" fill="#d01818"/>
<path d="M877.7 289V358.2H905.5V289" stroke="#d01818" stroke-width="1.2" fill="none"/>
<path d="M905.5 313H914V326" stroke="#d01818" stroke-width="0.9" fill="none"/>
<circle cx="914" cy="330.9" r="2.9" fill="none" stroke="#d01818" stroke-width="1.1"/><circle cx="914" cy="336.1" r="2.9" fill="none" stroke="#d01818" stroke-width="1.1"/>
<path d="M905.5 342H914V357" stroke="#d01818" stroke-width="0.9" fill="none"/>
<path d="M901.5 303V311M909.5 303V311" stroke="#d01818" stroke-width="1" stroke-dasharray="1.5 1"/>
<circle cx="914" cy="346" r="1" fill="#d01818"/>
<circle cx="914" cy="350" r="1" fill="#d01818"/>
<circle cx="914" cy="354" r="1" fill="#d01818"/>
<rect x="366.5" y="387.8" width="6" height="1.5" fill="#f2d34a" opacity="0.55"/>
<rect x="374.1" y="387.8" width="0.8" height="1.5" fill="#f2d34a" opacity="0.5"/>
<rect x="377.5" y="387.8" width="11.5" height="1.5" fill="#f2d34a" opacity="0.5"/>
<rect x="366.5" y="390.9" width="6" height="1.5" fill="#b8d040" opacity="0.55"/>
<rect x="374.1" y="390.9" width="0.8" height="1.5" fill="#b8d040" opacity="0.5"/>
<rect x="377.5" y="390.9" width="11.5" height="1.5" fill="#b8d040" opacity="0.5"/>
<rect x="366.5" y="394.0" width="6" height="1.5" fill="#d01818" opacity="0.55"/>
<rect x="374.1" y="394.0" width="0.8" height="1.5" fill="#d01818" opacity="0.5"/>
<rect x="377.5" y="394.0" width="11.5" height="1.5" fill="#d01818" opacity="0.5"/>
<rect x="366.5" y="397.1" width="6" height="1.5" fill="#f2d34a" opacity="0.55"/>
<rect x="374.1" y="397.1" width="0.8" height="1.5" fill="#f2d34a" opacity="0.5"/>
<rect x="377.5" y="397.1" width="11.5" height="1.5" fill="#f2d34a" opacity="0.5"/>
<rect x="366.5" y="400.2" width="6" height="1.5" fill="#6cbf3a" opacity="0.55"/>
<rect x="374.1" y="400.2" width="0.8" height="1.5" fill="#6cbf3a" opacity="0.5"/>
<rect x="377.5" y="400.2" width="11.5" height="1.5" fill="#6cbf3a" opacity="0.5"/>
<rect x="366.5" y="403.3" width="6" height="1.5" fill="#d01818" opacity="0.55"/>
<rect x="374.1" y="403.3" width="0.8" height="1.5" fill="#d01818" opacity="0.5"/>
<rect x="377.5" y="403.3" width="11.5" height="1.5" fill="#d01818" opacity="0.5"/>
<rect x="366.5" y="406.4" width="6" height="1.5" fill="#e8e8e8" opacity="0.55"/>
<rect x="374.1" y="406.4" width="0.8" height="1.5" fill="#e8e8e8" opacity="0.5"/>
<rect x="377.5" y="406.4" width="6" height="1.5" fill="#e8e8e8" opacity="0.5"/>
<rect x="366.5" y="409.5" width="6" height="1.5" fill="#e8e8e8" opacity="0.55"/>
<rect x="374.1" y="409.5" width="0.8" height="1.5" fill="#e8e8e8" opacity="0.5"/>
<rect x="377.5" y="409.5" width="12" height="1.5" fill="#e8e8e8" opacity="0.5"/>
<rect x="366.5" y="412.6" width="6" height="1.5" fill="#e8e8e8" opacity="0.55"/>
<rect x="374.1" y="412.6" width="0.8" height="1.5" fill="#e8e8e8" opacity="0.5"/>
<rect x="377.5" y="412.6" width="11" height="1.5" fill="#e8e8e8" opacity="0.5"/>
<rect x="366.5" y="415.7" width="6" height="1.5" fill="#e8e8e8" opacity="0.55"/>
<rect x="374.1" y="415.7" width="0.8" height="1.5" fill="#e8e8e8" opacity="0.5"/>
<rect x="377.5" y="415.7" width="20" height="1.5" fill="#e8e8e8" opacity="0.5"/>
<rect x="367.0" y="422.9" width="17.0" height="2.5" fill="#e0e0e0" opacity="0.6"/>
<rect x="447.6" y="387.8" width="6" height="1.5" fill="#f2d34a" opacity="0.55"/>
<rect x="455.2" y="387.8" width="0.8" height="1.5" fill="#f2d34a" opacity="0.5"/>
<rect x="458.6" y="387.8" width="11.5" height="1.5" fill="#f2d34a" opacity="0.5"/>
<rect x="447.6" y="390.9" width="6" height="1.5" fill="#b8d040" opacity="0.55"/>
<rect x="455.2" y="390.9" width="0.8" height="1.5" fill="#b8d040" opacity="0.5"/>
<rect x="458.6" y="390.9" width="11.5" height="1.5" fill="#b8d040" opacity="0.5"/>
<rect x="447.6" y="394.0" width="6" height="1.5" fill="#d01818" opacity="0.55"/>
<rect x="455.2" y="394.0" width="0.8" height="1.5" fill="#d01818" opacity="0.5"/>
<rect x="458.6" y="394.0" width="11.5" height="1.5" fill="#d01818" opacity="0.5"/>
<rect x="447.6" y="397.1" width="6" height="1.5" fill="#f2d34a" opacity="0.55"/>
<rect x="455.2" y="397.1" width="0.8" height="1.5" fill="#f2d34a" opacity="0.5"/>
<rect x="458.6" y="397.1" width="11.5" height="1.5" fill="#f2d34a" opacity="0.5"/>
<rect x="447.6" y="400.2" width="6" height="1.5" fill="#6cbf3a" opacity="0.55"/>
<rect x="455.2" y="400.2" width="0.8" height="1.5" fill="#6cbf3a" opacity="0.5"/>
<rect x="458.6" y="400.2" width="11.5" height="1.5" fill="#6cbf3a" opacity="0.5"/>
<rect x="447.6" y="403.3" width="6" height="1.5" fill="#d01818" opacity="0.55"/>
<rect x="455.2" y="403.3" width="0.8" height="1.5" fill="#d01818" opacity="0.5"/>
<rect x="458.6" y="403.3" width="11.5" height="1.5" fill="#d01818" opacity="0.5"/>
<rect x="447.6" y="406.4" width="6" height="1.5" fill="#e8e8e8" opacity="0.55"/>
<rect x="455.2" y="406.4" width="0.8" height="1.5" fill="#e8e8e8" opacity="0.5"/>
<rect x="458.6" y="406.4" width="6" height="1.5" fill="#e8e8e8" opacity="0.5"/>
<rect x="447.6" y="409.5" width="6" height="1.5" fill="#e8e8e8" opacity="0.55"/>
<rect x="455.2" y="409.5" width="0.8" height="1.5" fill="#e8e8e8" opacity="0.5"/>
<rect x="458.6" y="409.5" width="12" height="1.5" fill="#e8e8e8" opacity="0.5"/>
<rect x="447.6" y="412.6" width="6" height="1.5" fill="#e8e8e8" opacity="0.55"/>
<rect x="455.2" y="412.6" width="0.8" height="1.5" fill="#e8e8e8" opacity="0.5"/>
<rect x="458.6" y="412.6" width="11" height="1.5" fill="#e8e8e8" opacity="0.5"/>
<rect x="447.6" y="415.7" width="6" height="1.5" fill="#e8e8e8" opacity="0.55"/>
<rect x="455.2" y="415.7" width="0.8" height="1.5" fill="#e8e8e8" opacity="0.5"/>
<rect x="458.6" y="415.7" width="20" height="1.5" fill="#e8e8e8" opacity="0.5"/>
<rect x="447.6" y="422.9" width="12.4" height="2.5" fill="#e0e0e0" opacity="0.6"/>
<rect x="488.0" y="387.8" width="6" height="1.5" fill="#f2d34a" opacity="0.55"/>
<rect x="495.6" y="387.8" width="0.8" height="1.5" fill="#f2d34a" opacity="0.5"/>
<rect x="499.0" y="387.8" width="11.5" height="1.5" fill="#f2d34a" opacity="0.5"/>
<rect x="488.0" y="390.9" width="6" height="1.5" fill="#b8d040" opacity="0.55"/>
<rect x="495.6" y="390.9" width="0.8" height="1.5" fill="#b8d040" opacity="0.5"/>
<rect x="499.0" y="390.9" width="11.5" height="1.5" fill="#b8d040" opacity="0.5"/>
<rect x="488.0" y="394.0" width="6" height="1.5" fill="#d01818" opacity="0.55"/>
<rect x="495.6" y="394.0" width="0.8" height="1.5" fill="#d01818" opacity="0.5"/>
<rect x="499.0" y="394.0" width="11.5" height="1.5" fill="#d01818" opacity="0.5"/>
<rect x="488.0" y="397.1" width="6" height="1.5" fill="#f2d34a" opacity="0.55"/>
<rect x="495.6" y="397.1" width="0.8" height="1.5" fill="#f2d34a" opacity="0.5"/>
<rect x="499.0" y="397.1" width="11.5" height="1.5" fill="#f2d34a" opacity="0.5"/>
<rect x="488.0" y="400.2" width="6" height="1.5" fill="#6cbf3a" opacity="0.55"/>
<rect x="495.6" y="400.2" width="0.8" height="1.5" fill="#6cbf3a" opacity="0.5"/>
<rect x="499.0" y="400.2" width="11.5" height="1.5" fill="#6cbf3a" opacity="0.5"/>
<rect x="488.0" y="403.3" width="6" height="1.5" fill="#d01818" opacity="0.55"/>
<rect x="495.6" y="403.3" width="0.8" height="1.5" fill="#d01818" opacity="0.5"/>
<rect x="499.0" y="403.3" width="11.5" height="1.5" fill="#d01818" opacity="0.5"/>
<rect x="488.0" y="406.4" width="6" height="1.5" fill="#e8e8e8" opacity="0.55"/>
<rect x="495.6" y="406.4" width="0.8" height="1.5" fill="#e8e8e8" opacity="0.5"/>
<rect x="499.0" y="406.4" width="6" height="1.5" fill="#e8e8e8" opacity="0.5"/>
<rect x="488.0" y="409.5" width="6" height="1.5" fill="#e8e8e8" opacity="0.55"/>
<rect x="495.6" y="409.5" width="0.8" height="1.5" fill="#e8e8e8" opacity="0.5"/>
<rect x="499.0" y="409.5" width="12" height="1.5" fill="#e8e8e8" opacity="0.5"/>
<rect x="488.0" y="412.6" width="6" height="1.5" fill="#e8e8e8" opacity="0.55"/>
<rect x="495.6" y="412.6" width="0.8" height="1.5" fill="#e8e8e8" opacity="0.5"/>
<rect x="499.0" y="412.6" width="11" height="1.5" fill="#e8e8e8" opacity="0.5"/>
<rect x="488.0" y="415.7" width="6" height="1.5" fill="#e8e8e8" opacity="0.55"/>
<rect x="495.6" y="415.7" width="0.8" height="1.5" fill="#e8e8e8" opacity="0.5"/>
<rect x="499.0" y="415.7" width="20" height="1.5" fill="#e8e8e8" opacity="0.5"/>
<rect x="486.0" y="422.9" width="22.0" height="2.5" fill="#e0e0e0" opacity="0.6"/>
<rect x="536.0" y="387.8" width="6" height="1.5" fill="#f2d34a" opacity="0.55"/>
<rect x="543.6" y="387.8" width="0.8" height="1.5" fill="#f2d34a" opacity="0.5"/>
<rect x="547.0" y="387.8" width="11.5" height="1.5" fill="#f2d34a" opacity="0.5"/>
<rect x="536.0" y="390.9" width="6" height="1.5" fill="#b8d040" opacity="0.55"/>
<rect x="543.6" y="390.9" width="0.8" height="1.5" fill="#b8d040" opacity="0.5"/>
<rect x="547.0" y="390.9" width="11.5" height="1.5" fill="#b8d040" opacity="0.5"/>
<rect x="536.0" y="394.0" width="6" height="1.5" fill="#d01818" opacity="0.55"/>
<rect x="543.6" y="394.0" width="0.8" height="1.5" fill="#d01818" opacity="0.5"/>
<rect x="547.0" y="394.0" width="11.5" height="1.5" fill="#d01818" opacity="0.5"/>
<rect x="536.0" y="397.1" width="6" height="1.5" fill="#f2d34a" opacity="0.55"/>
<rect x="543.6" y="397.1" width="0.8" height="1.5" fill="#f2d34a" opacity="0.5"/>
<rect x="547.0" y="397.1" width="11.5" height="1.5" fill="#f2d34a" opacity="0.5"/>
<rect x="536.0" y="400.2" width="6" height="1.5" fill="#6cbf3a" opacity="0.55"/>
<rect x="543.6" y="400.2" width="0.8" height="1.5" fill="#6cbf3a" opacity="0.5"/>
<rect x="547.0" y="400.2" width="11.5" height="1.5" fill="#6cbf3a" opacity="0.5"/>
<rect x="536.0" y="403.3" width="6" height="1.5" fill="#d01818" opacity="0.55"/>
<rect x="543.6" y="403.3" width="0.8" height="1.5" fill="#d01818" opacity="0.5"/>
<rect x="547.0" y="403.3" width="11.5" height="1.5" fill="#d01818" opacity="0.5"/>
<rect x="536.0" y="406.4" width="6" height="1.5" fill="#e8e8e8" opacity="0.55"/>
<rect x="543.6" y="406.4" width="0.8" height="1.5" fill="#e8e8e8" opacity="0.5"/>
<rect x="547.0" y="406.4" width="6" height="1.5" fill="#e8e8e8" opacity="0.5"/>
<rect x="536.0" y="409.5" width="6" height="1.5" fill="#e8e8e8" opacity="0.55"/>
<rect x="543.6" y="409.5" width="0.8" height="1.5" fill="#e8e8e8" opacity="0.5"/>
<rect x="547.0" y="409.5" width="12" height="1.5" fill="#e8e8e8" opacity="0.5"/>
<rect x="536.0" y="412.6" width="6" height="1.5" fill="#e8e8e8" opacity="0.55"/>
<rect x="543.6" y="412.6" width="0.8" height="1.5" fill="#e8e8e8" opacity="0.5"/>
<rect x="547.0" y="412.6" width="11" height="1.5" fill="#e8e8e8" opacity="0.5"/>
<rect x="536.0" y="415.7" width="6" height="1.5" fill="#e8e8e8" opacity="0.55"/>
<rect x="543.6" y="415.7" width="0.8" height="1.5" fill="#e8e8e8" opacity="0.5"/>
<rect x="547.0" y="415.7" width="20" height="1.5" fill="#e8e8e8" opacity="0.5"/>
<rect x="529.0" y="422.9" width="35.0" height="2.5" fill="#e0e0e0" opacity="0.6"/>
<rect x="585.0" y="387.8" width="6" height="1.5" fill="#f2d34a" opacity="0.55"/>
<rect x="592.6" y="387.8" width="0.8" height="1.5" fill="#f2d34a" opacity="0.5"/>
<rect x="596.0" y="387.8" width="11.5" height="1.5" fill="#f2d34a" opacity="0.5"/>
<rect x="585.0" y="390.9" width="6" height="1.5" fill="#b8d040" opacity="0.55"/>
<rect x="592.6" y="390.9" width="0.8" height="1.5" fill="#b8d040" opacity="0.5"/>
<rect x="596.0" y="390.9" width="11.5" height="1.5" fill="#b8d040" opacity="0.5"/>
<rect x="585.0" y="394.0" width="6" height="1.5" fill="#d01818" opacity="0.55"/>
<rect x="592.6" y="394.0" width="0.8" height="1.5" fill="#d01818" opacity="0.5"/>
<rect x="596.0" y="394.0" width="11.5" height="1.5" fill="#d01818" opacity="0.5"/>
<rect x="585.0" y="397.1" width="6" height="1.5" fill="#f2d34a" opacity="0.55"/>
<rect x="592.6" y="397.1" width="0.8" height="1.5" fill="#f2d34a" opacity="0.5"/>
<rect x="596.0" y="397.1" width="11.5" height="1.5" fill="#f2d34a" opacity="0.5"/>
<rect x="585.0" y="400.2" width="6" height="1.5" fill="#6cbf3a" opacity="0.55"/>
<rect x="592.6" y="400.2" width="0.8" height="1.5" fill="#6cbf3a" opacity="0.5"/>
<rect x="596.0" y="400.2" width="11.5" height="1.5" fill="#6cbf3a" opacity="0.5"/>
<rect x="585.0" y="403.3" width="6" height="1.5" fill="#d01818" opacity="0.55"/>
<rect x="592.6" y="403.3" width="0.8" height="1.5" fill="#d01818" opacity="0.5"/>
<rect x="596.0" y="403.3" width="11.5" height="1.5" fill="#d01818" opacity="0.5"/>
<rect x="585.0" y="406.4" width="6" height="1.5" fill="#e8e8e8" opacity="0.55"/>
<rect x="592.6" y="406.4" width="0.8" height="1.5" fill="#e8e8e8" opacity="0.5"/>
<rect x="596.0" y="406.4" width="6" height="1.5" fill="#e8e8e8" opacity="0.5"/>
<rect x="585.0" y="409.5" width="6" height="1.5" fill="#e8e8e8" opacity="0.55"/>
<rect x="592.6" y="409.5" width="0.8" height="1.5" fill="#e8e8e8" opacity="0.5"/>
<rect x="596.0" y="409.5" width="12" height="1.5" fill="#e8e8e8" opacity="0.5"/>
<rect x="585.0" y="412.6" width="6" height="1.5" fill="#e8e8e8" opacity="0.55"/>
<rect x="592.6" y="412.6" width="0.8" height="1.5" fill="#e8e8e8" opacity="0.5"/>
<rect x="596.0" y="412.6" width="11" height="1.5" fill="#e8e8e8" opacity="0.5"/>
<rect x="585.0" y="415.7" width="6" height="1.5" fill="#e8e8e8" opacity="0.55"/>
<rect x="592.6" y="415.7" width="0.8" height="1.5" fill="#e8e8e8" opacity="0.5"/>
<rect x="596.0" y="415.7" width="20" height="1.5" fill="#e8e8e8" opacity="0.5"/>
<rect x="582.0" y="422.9" width="25.0" height="2.5" fill="#e0e0e0" opacity="0.6"/>
<rect x="658.0" y="387.8" width="6" height="1.5" fill="#f2d34a" opacity="0.55"/>
<rect x="665.6" y="387.8" width="0.8" height="1.5" fill="#f2d34a" opacity="0.5"/>
<rect x="669.0" y="387.8" width="11.5" height="1.5" fill="#f2d34a" opacity="0.5"/>
<rect x="658.0" y="390.9" width="6" height="1.5" fill="#b8d040" opacity="0.55"/>
<rect x="665.6" y="390.9" width="0.8" height="1.5" fill="#b8d040" opacity="0.5"/>
<rect x="669.0" y="390.9" width="11.5" height="1.5" fill="#b8d040" opacity="0.5"/>
<rect x="658.0" y="394.0" width="6" height="1.5" fill="#d01818" opacity="0.55"/>
<rect x="665.6" y="394.0" width="0.8" height="1.5" fill="#d01818" opacity="0.5"/>
<rect x="669.0" y="394.0" width="11.5" height="1.5" fill="#d01818" opacity="0.5"/>
<rect x="658.0" y="397.1" width="6" height="1.5" fill="#f2d34a" opacity="0.55"/>
<rect x="665.6" y="397.1" width="0.8" height="1.5" fill="#f2d34a" opacity="0.5"/>
<rect x="669.0" y="397.1" width="11.5" height="1.5" fill="#f2d34a" opacity="0.5"/>
<rect x="658.0" y="400.2" width="6" height="1.5" fill="#6cbf3a" opacity="0.55"/>
<rect x="665.6" y="400.2" width="0.8" height="1.5" fill="#6cbf3a" opacity="0.5"/>
<rect x="669.0" y="400.2" width="11.5" height="1.5" fill="#6cbf3a" opacity="0.5"/>
<rect x="658.0" y="403.3" width="6" height="1.5" fill="#d01818" opacity="0.55"/>
<rect x="665.6" y="403.3" width="0.8" height="1.5" fill="#d01818" opacity="0.5"/>
<rect x="669.0" y="403.3" width="11.5" height="1.5" fill="#d01818" opacity="0.5"/>
<rect x="658.0" y="406.4" width="6" height="1.5" fill="#e8e8e8" opacity="0.55"/>
<rect x="665.6" y="406.4" width="0.8" height="1.5" fill="#e8e8e8" opacity="0.5"/>
<rect x="669.0" y="406.4" width="6" height="1.5" fill="#e8e8e8" opacity="0.5"/>
<rect x="658.0" y="409.5" width="6" height="1.5" fill="#e8e8e8" opacity="0.55"/>
<rect x="665.6" y="409.5" width="0.8" height="1.5" fill="#e8e8e8" opacity="0.5"/>
<rect x="669.0" y="409.5" width="12" height="1.5" fill="#e8e8e8" opacity="0.5"/>
<rect x="658.0" y="412.6" width="6" height="1.5" fill="#e8e8e8" opacity="0.55"/>
<rect x="665.6" y="412.6" width="0.8" height="1.5" fill="#e8e8e8" opacity="0.5"/>
<rect x="669.0" y="412.6" width="11" height="1.5" fill="#e8e8e8" opacity="0.5"/>
<rect x="658.0" y="415.7" width="6" height="1.5" fill="#e8e8e8" opacity="0.55"/>
<rect x="665.6" y="415.7" width="0.8" height="1.5" fill="#e8e8e8" opacity="0.5"/>
<rect x="669.0" y="415.7" width="20" height="1.5" fill="#e8e8e8" opacity="0.5"/>
<rect x="657.7" y="422.9" width="30.8" height="2.5" fill="#e0e0e0" opacity="0.6"/>
<rect x="713.0" y="387.8" width="6" height="1.5" fill="#f2d34a" opacity="0.55"/>
<rect x="720.6" y="387.8" width="0.8" height="1.5" fill="#f2d34a" opacity="0.5"/>
<rect x="724.0" y="387.8" width="11.5" height="1.5" fill="#f2d34a" opacity="0.5"/>
<rect x="713.0" y="390.9" width="6" height="1.5" fill="#b8d040" opacity="0.55"/>
<rect x="720.6" y="390.9" width="0.8" height="1.5" fill="#b8d040" opacity="0.5"/>
<rect x="724.0" y="390.9" width="11.5" height="1.5" fill="#b8d040" opacity="0.5"/>
<rect x="713.0" y="394.0" width="6" height="1.5" fill="#d01818" opacity="0.55"/>
<rect x="720.6" y="394.0" width="0.8" height="1.5" fill="#d01818" opacity="0.5"/>
<rect x="724.0" y="394.0" width="11.5" height="1.5" fill="#d01818" opacity="0.5"/>
<rect x="713.0" y="397.1" width="6" height="1.5" fill="#f2d34a" opacity="0.55"/>
<rect x="720.6" y="397.1" width="0.8" height="1.5" fill="#f2d34a" opacity="0.5"/>
<rect x="724.0" y="397.1" width="11.5" height="1.5" fill="#f2d34a" opacity="0.5"/>
<rect x="713.0" y="400.2" width="6" height="1.5" fill="#6cbf3a" opacity="0.55"/>
<rect x="720.6" y="400.2" width="0.8" height="1.5" fill="#6cbf3a" opacity="0.5"/>
<rect x="724.0" y="400.2" width="11.5" height="1.5" fill="#6cbf3a" opacity="0.5"/>
<rect x="713.0" y="403.3" width="6" height="1.5" fill="#d01818" opacity="0.55"/>
<rect x="720.6" y="403.3" width="0.8" height="1.5" fill="#d01818" opacity="0.5"/>
<rect x="724.0" y="403.3" width="11.5" height="1.5" fill="#d01818" opacity="0.5"/>
<rect x="713.0" y="406.4" width="6" height="1.5" fill="#e8e8e8" opacity="0.55"/>
<rect x="720.6" y="406.4" width="0.8" height="1.5" fill="#e8e8e8" opacity="0.5"/>
<rect x="724.0" y="406.4" width="6" height="1.5" fill="#e8e8e8" opacity="0.5"/>
<rect x="713.0" y="409.5" width="6" height="1.5" fill="#e8e8e8" opacity="0.55"/>
<rect x="720.6" y="409.5" width="0.8" height="1.5" fill="#e8e8e8" opacity="0.5"/>
<rect x="724.0" y="409.5" width="12" height="1.5" fill="#e8e8e8" opacity="0.5"/>
<rect x="713.0" y="412.6" width="6" height="1.5" fill="#e8e8e8" opacity="0.55"/>
<rect x="720.6" y="412.6" width="0.8" height="1.5" fill="#e8e8e8" opacity="0.5"/>
<rect x="724.0" y="412.6" width="11" height="1.5" fill="#e8e8e8" opacity="0.5"/>
<rect x="713.0" y="415.7" width="6" height="1.5" fill="#e8e8e8" opacity="0.55"/>
<rect x="720.6" y="415.7" width="0.8" height="1.5" fill="#e8e8e8" opacity="0.5"/>
<rect x="724.0" y="415.7" width="20" height="1.5" fill="#e8e8e8" opacity="0.5"/>
<rect x="713.0" y="422.9" width="21.0" height="2.5" fill="#e0e0e0" opacity="0.6"/>
<rect x="762.0" y="387.8" width="6" height="1.5" fill="#f2d34a" opacity="0.55"/>
<rect x="769.6" y="387.8" width="0.8" height="1.5" fill="#f2d34a" opacity="0.5"/>
<rect x="773.0" y="387.8" width="11.5" height="1.5" fill="#f2d34a" opacity="0.5"/>
<rect x="762.0" y="390.9" width="6" height="1.5" fill="#b8d040" opacity="0.55"/>
<rect x="769.6" y="390.9" width="0.8" height="1.5" fill="#b8d040" opacity="0.5"/>
<rect x="773.0" y="390.9" width="11.5" height="1.5" fill="#b8d040" opacity="0.5"/>
<rect x="762.0" y="394.0" width="6" height="1.5" fill="#d01818" opacity="0.55"/>
<rect x="769.6" y="394.0" width="0.8" height="1.5" fill="#d01818" opacity="0.5"/>
<rect x="773.0" y="394.0" width="11.5" height="1.5" fill="#d01818" opacity="0.5"/>
<rect x="762.0" y="397.1" width="6" height="1.5" fill="#f2d34a" opacity="0.55"/>
<rect x="769.6" y="397.1" width="0.8" height="1.5" fill="#f2d34a" opacity="0.5"/>
<rect x="773.0" y="397.1" width="11.5" height="1.5" fill="#f2d34a" opacity="0.5"/>
<rect x="762.0" y="400.2" width="6" height="1.5" fill="#6cbf3a" opacity="0.55"/>
<rect x="769.6" y="400.2" width="0.8" height="1.5" fill="#6cbf3a" opacity="0.5"/>
<rect x="773.0" y="400.2" width="11.5" height="1.5" fill="#6cbf3a" opacity="0.5"/>
<rect x="762.0" y="403.3" width="6" height="1.5" fill="#d01818" opacity="0.55"/>
<rect x="769.6" y="403.3" width="0.8" height="1.5" fill="#d01818" opacity="0.5"/>
<rect x="773.0" y="403.3" width="11.5" height="1.5" fill="#d01818" opacity="0.5"/>
<rect x="762.0" y="406.4" width="6" height="1.5" fill="#e8e8e8" opacity="0.55"/>
<rect x="769.6" y="406.4" width="0.8" height="1.5" fill="#e8e8e8" opacity="0.5"/>
<rect x="773.0" y="406.4" width="6" height="1.5" fill="#e8e8e8" opacity="0.5"/>
<rect x="762.0" y="409.5" width="6" height="1.5" fill="#e8e8e8" opacity="0.55"/>
<rect x="769.6" y="409.5" width="0.8" height="1.5" fill="#e8e8e8" opacity="0.5"/>
<rect x="773.0" y="409.5" width="12" height="1.5" fill="#e8e8e8" opacity="0.5"/>
<rect x="762.0" y="412.6" width="6" height="1.5" fill="#e8e8e8" opacity="0.55"/>
<rect x="769.6" y="412.6" width="0.8" height="1.5" fill="#e8e8e8" opacity="0.5"/>
<rect x="773.0" y="412.6" width="11" height="1.5" fill="#e8e8e8" opacity="0.5"/>
<rect x="762.0" y="415.7" width="6" height="1.5" fill="#e8e8e8" opacity="0.55"/>
<rect x="769.6" y="415.7" width="0.8" height="1.5" fill="#e8e8e8" opacity="0.5"/>
<rect x="773.0" y="415.7" width="20" height="1.5" fill="#e8e8e8" opacity="0.5"/>
<rect x="758.5" y="422.9" width="26.3" height="2.5" fill="#e0e0e0" opacity="0.6"/>
<rect x="811.0" y="387.8" width="6" height="1.5" fill="#f2d34a" opacity="0.55"/>
<rect x="818.6" y="387.8" width="0.8" height="1.5" fill="#f2d34a" opacity="0.5"/>
<rect x="822.0" y="387.8" width="11.5" height="1.5" fill="#f2d34a" opacity="0.5"/>
<rect x="811.0" y="390.9" width="6" height="1.5" fill="#b8d040" opacity="0.55"/>
<rect x="818.6" y="390.9" width="0.8" height="1.5" fill="#b8d040" opacity="0.5"/>
<rect x="822.0" y="390.9" width="11.5" height="1.5" fill="#b8d040" opacity="0.5"/>
<rect x="811.0" y="394.0" width="6" height="1.5" fill="#d01818" opacity="0.55"/>
<rect x="818.6" y="394.0" width="0.8" height="1.5" fill="#d01818" opacity="0.5"/>
<rect x="822.0" y="394.0" width="11.5" height="1.5" fill="#d01818" opacity="0.5"/>
<rect x="811.0" y="397.1" width="6" height="1.5" fill="#f2d34a" opacity="0.55"/>
<rect x="818.6" y="397.1" width="0.8" height="1.5" fill="#f2d34a" opacity="0.5"/>
<rect x="822.0" y="397.1" width="11.5" height="1.5" fill="#f2d34a" opacity="0.5"/>
<rect x="811.0" y="400.2" width="6" height="1.5" fill="#6cbf3a" opacity="0.55"/>
<rect x="818.6" y="400.2" width="0.8" height="1.5" fill="#6cbf3a" opacity="0.5"/>
<rect x="822.0" y="400.2" width="11.5" height="1.5" fill="#6cbf3a" opacity="0.5"/>
<rect x="811.0" y="403.3" width="6" height="1.5" fill="#d01818" opacity="0.55"/>
<rect x="818.6" y="403.3" width="0.8" height="1.5" fill="#d01818" opacity="0.5"/>
<rect x="822.0" y="403.3" width="11.5" height="1.5" fill="#d01818" opacity="0.5"/>
<rect x="811.0" y="406.4" width="6" height="1.5" fill="#e8e8e8" opacity="0.55"/>
<rect x="818.6" y="406.4" width="0.8" height="1.5" fill="#e8e8e8" opacity="0.5"/>
<rect x="822.0" y="406.4" width="6" height="1.5" fill="#e8e8e8" opacity="0.5"/>
<rect x="811.0" y="409.5" width="6" height="1.5" fill="#e8e8e8" opacity="0.55"/>
<rect x="818.6" y="409.5" width="0.8" height="1.5" fill="#e8e8e8" opacity="0.5"/>
<rect x="822.0" y="409.5" width="12" height="1.5" fill="#e8e8e8" opacity="0.5"/>
<rect x="811.0" y="412.6" width="6" height="1.5" fill="#e8e8e8" opacity="0.55"/>
<rect x="818.6" y="412.6" width="0.8" height="1.5" fill="#e8e8e8" opacity="0.5"/>
<rect x="822.0" y="412.6" width="11" height="1.5" fill="#e8e8e8" opacity="0.5"/>
<rect x="811.0" y="415.7" width="6" height="1.5" fill="#e8e8e8" opacity="0.55"/>
<rect x="818.6" y="415.7" width="0.8" height="1.5" fill="#e8e8e8" opacity="0.5"/>
<rect x="822.0" y="415.7" width="20" height="1.5" fill="#e8e8e8" opacity="0.5"/>
<rect x="805.7" y="422.9" width="26.3" height="2.5" fill="#e0e0e0" opacity="0.6"/>
<rect x="846.0" y="387.8" width="6" height="1.5" fill="#f2d34a" opacity="0.55"/>
<rect x="853.6" y="387.8" width="0.8" height="1.5" fill="#f2d34a" opacity="0.5"/>
<rect x="857.0" y="387.8" width="11.5" height="1.5" fill="#f2d34a" opacity="0.5"/>
<rect x="846.0" y="390.9" width="6" height="1.5" fill="#b8d040" opacity="0.55"/>
<rect x="853.6" y="390.9" width="0.8" height="1.5" fill="#b8d040" opacity="0.5"/>
<rect x="857.0" y="390.9" width="11.5" height="1.5" fill="#b8d040" opacity="0.5"/>
<rect x="846.0" y="394.0" width="6" height="1.5" fill="#d01818" opacity="0.55"/>
<rect x="853.6" y="394.0" width="0.8" height="1.5" fill="#d01818" opacity="0.5"/>
<rect x="857.0" y="394.0" width="11.5" height="1.5" fill="#d01818" opacity="0.5"/>
<rect x="846.0" y="397.1" width="6" height="1.5" fill="#f2d34a" opacity="0.55"/>
<rect x="853.6" y="397.1" width="0.8" height="1.5" fill="#f2d34a" opacity="0.5"/>
<rect x="857.0" y="397.1" width="11.5" height="1.5" fill="#f2d34a" opacity="0.5"/>
<rect x="846.0" y="400.2" width="6" height="1.5" fill="#6cbf3a" opacity="0.55"/>
<rect x="853.6" y="400.2" width="0.8" height="1.5" fill="#6cbf3a" opacity="0.5"/>
<rect x="857.0" y="400.2" width="11.5" height="1.5" fill="#6cbf3a" opacity="0.5"/>
<rect x="846.0" y="403.3" width="6" height="1.5" fill="#d01818" opacity="0.55"/>
<rect x="853.6" y="403.3" width="0.8" height="1.5" fill="#d01818" opacity="0.5"/>
<rect x="857.0" y="403.3" width="11.5" height="1.5" fill="#d01818" opacity="0.5"/>
<rect x="846.0" y="406.4" width="6" height="1.5" fill="#e8e8e8" opacity="0.55"/>
<rect x="853.6" y="406.4" width="0.8" height="1.5" fill="#e8e8e8" opacity="0.5"/>
<rect x="857.0" y="406.4" width="6" height="1.5" fill="#e8e8e8" opacity="0.5"/>
<rect x="846.0" y="409.5" width="6" height="1.5" fill="#e8e8e8" opacity="0.55"/>
<rect x="853.6" y="409.5" width="0.8" height="1.5" fill="#e8e8e8" opacity="0.5"/>
<rect x="857.0" y="409.5" width="12" height="1.5" fill="#e8e8e8" opacity="0.5"/>
<rect x="846.0" y="412.6" width="6" height="1.5" fill="#e8e8e8" opacity="0.55"/>
<rect x="853.6" y="412.6" width="0.8" height="1.5" fill="#e8e8e8" opacity="0.5"/>
<rect x="857.0" y="412.6" width="11" height="1.5" fill="#e8e8e8" opacity="0.5"/>
<rect x="846.0" y="415.7" width="6" height="1.5" fill="#e8e8e8" opacity="0.55"/>
<rect x="853.6" y="415.7" width="0.8" height="1.5" fill="#e8e8e8" opacity="0.5"/>
<rect x="857.0" y="415.7" width="20" height="1.5" fill="#e8e8e8" opacity="0.5"/>
<rect x="846.0" y="422.9" width="17.5" height="2.5" fill="#e0e0e0" opacity="0.6"/>
<rect x="935.3" y="387.8" width="6" height="1.5" fill="#f2d34a" opacity="0.55"/>
<rect x="942.9" y="387.8" width="0.8" height="1.5" fill="#f2d34a" opacity="0.5"/>
<rect x="946.3" y="387.8" width="11.5" height="1.5" fill="#f2d34a" opacity="0.5"/>
<rect x="935.3" y="390.9" width="6" height="1.5" fill="#b8d040" opacity="0.55"/>
<rect x="942.9" y="390.9" width="0.8" height="1.5" fill="#b8d040" opacity="0.5"/>
<rect x="946.3" y="390.9" width="11.5" height="1.5" fill="#b8d040" opacity="0.5"/>
<rect x="935.3" y="394.0" width="6" height="1.5" fill="#d01818" opacity="0.55"/>
<rect x="942.9" y="394.0" width="0.8" height="1.5" fill="#d01818" opacity="0.5"/>
<rect x="946.3" y="394.0" width="11.5" height="1.5" fill="#d01818" opacity="0.5"/>
<rect x="935.3" y="397.1" width="6" height="1.5" fill="#f2d34a" opacity="0.55"/>
<rect x="942.9" y="397.1" width="0.8" height="1.5" fill="#f2d34a" opacity="0.5"/>
<rect x="946.3" y="397.1" width="11.5" height="1.5" fill="#f2d34a" opacity="0.5"/>
<rect x="935.3" y="400.2" width="6" height="1.5" fill="#6cbf3a" opacity="0.55"/>
<rect x="942.9" y="400.2" width="0.8" height="1.5" fill="#6cbf3a" opacity="0.5"/>
<rect x="946.3" y="400.2" width="11.5" height="1.5" fill="#6cbf3a" opacity="0.5"/>
<rect x="935.3" y="403.3" width="6" height="1.5" fill="#d01818" opacity="0.55"/>
<rect x="942.9" y="403.3" width="0.8" height="1.5" fill="#d01818" opacity="0.5"/>
<rect x="946.3" y="403.3" width="11.5" height="1.5" fill="#d01818" opacity="0.5"/>
<rect x="935.3" y="406.4" width="6" height="1.5" fill="#e8e8e8" opacity="0.55"/>
<rect x="942.9" y="406.4" width="0.8" height="1.5" fill="#e8e8e8" opacity="0.5"/>
<rect x="946.3" y="406.4" width="6" height="1.5" fill="#e8e8e8" opacity="0.5"/>
<rect x="935.3" y="409.5" width="6" height="1.5" fill="#e8e8e8" opacity="0.55"/>
<rect x="942.9" y="409.5" width="0.8" height="1.5" fill="#e8e8e8" opacity="0.5"/>
<rect x="946.3" y="409.5" width="12" height="1.5" fill="#e8e8e8" opacity="0.5"/>
<rect x="935.3" y="412.6" width="6" height="1.5" fill="#e8e8e8" opacity="0.55"/>
<rect x="942.9" y="412.6" width="0.8" height="1.5" fill="#e8e8e8" opacity="0.5"/>
<rect x="946.3" y="412.6" width="11" height="1.5" fill="#e8e8e8" opacity="0.5"/>
<rect x="935.3" y="415.7" width="6" height="1.5" fill="#e8e8e8" opacity="0.55"/>
<rect x="942.9" y="415.7" width="0.8" height="1.5" fill="#e8e8e8" opacity="0.5"/>
<rect x="946.3" y="415.7" width="20" height="1.5" fill="#e8e8e8" opacity="0.5"/>
<rect x="935.3" y="422.9" width="17.5" height="2.5" fill="#e0e0e0" opacity="0.6"/>
<rect x="361.0" y="439.0" width="27.0" height="2.6" fill="#e8e8e8" opacity="0.6"/>
<rect x="361.0" y="444.3" width="27.0" height="9.6" fill="none" stroke="#a8a8a8" stroke-width="0.7" rx="0.8"/>
<rect x="362.6" y="446.3" width="7" height="1.6" fill="#f2d34a" opacity="0.6"/>
<rect x="372.0" y="446.3" width="12.0" height="1.6" fill="#f2d34a" opacity="0.45"/>
<rect x="362.6" y="449.6" width="7" height="1.6" fill="#6cbf3a" opacity="0.6"/>
<rect x="372.0" y="449.6" width="12.0" height="1.6" fill="#6cbf3a" opacity="0.45"/>
<rect x="403.0" y="439.0" width="27.0" height="2.6" fill="#e8e8e8" opacity="0.6"/>
<rect x="403.0" y="444.3" width="27.6" height="9.6" fill="none" stroke="#a8a8a8" stroke-width="0.7" rx="0.8"/>
<rect x="404.6" y="446.3" width="7" height="1.6" fill="#f2d34a" opacity="0.6"/>
<rect x="414.0" y="446.3" width="12.6" height="1.6" fill="#f2d34a" opacity="0.45"/>
<rect x="404.6" y="449.6" width="7" height="1.6" fill="#6cbf3a" opacity="0.6"/>
<rect x="414.0" y="449.6" width="12.6" height="1.6" fill="#6cbf3a" opacity="0.45"/>
<rect x="442.0" y="439.0" width="27.0" height="2.6" fill="#e8e8e8" opacity="0.6"/>
<rect x="442.0" y="444.3" width="27.6" height="9.6" fill="none" stroke="#a8a8a8" stroke-width="0.7" rx="0.8"/>
<rect x="443.6" y="446.3" width="7" height="1.6" fill="#f2d34a" opacity="0.6"/>
<rect x="453.0" y="446.3" width="12.6" height="1.6" fill="#f2d34a" opacity="0.45"/>
<rect x="443.6" y="449.6" width="7" height="1.6" fill="#6cbf3a" opacity="0.6"/>
<rect x="453.0" y="449.6" width="12.6" height="1.6" fill="#6cbf3a" opacity="0.45"/>
<rect x="482.7" y="439.0" width="31.6" height="2.6" fill="#e8e8e8" opacity="0.6"/>
<rect x="482.7" y="444.3" width="26.9" height="9.6" fill="none" stroke="#a8a8a8" stroke-width="0.7" rx="0.8"/>
<rect x="484.3" y="446.3" width="7" height="1.6" fill="#f2d34a" opacity="0.6"/>
<rect x="493.7" y="446.3" width="11.9" height="1.6" fill="#f2d34a" opacity="0.45"/>
<rect x="484.3" y="449.6" width="7" height="1.6" fill="#6cbf3a" opacity="0.6"/>
<rect x="493.7" y="449.6" width="11.9" height="1.6" fill="#6cbf3a" opacity="0.45"/>
<rect x="529.0" y="439.0" width="35.0" height="2.6" fill="#e8e8e8" opacity="0.6"/>
<rect x="531.3" y="444.3" width="27.0" height="9.6" fill="none" stroke="#a8a8a8" stroke-width="0.7" rx="0.8"/>
<rect x="532.9" y="446.3" width="7" height="1.6" fill="#f2d34a" opacity="0.6"/>
<rect x="542.3" y="446.3" width="12.0" height="1.6" fill="#f2d34a" opacity="0.45"/>
<rect x="532.9" y="449.6" width="7" height="1.6" fill="#6cbf3a" opacity="0.6"/>
<rect x="542.3" y="449.6" width="12.0" height="1.6" fill="#6cbf3a" opacity="0.45"/>
<rect x="574.0" y="439.0" width="33.0" height="2.6" fill="#e8e8e8" opacity="0.6"/>
<rect x="579.4" y="444.3" width="26.3" height="9.6" fill="none" stroke="#a8a8a8" stroke-width="0.7" rx="0.8"/>
<rect x="581.0" y="446.3" width="7" height="1.6" fill="#f2d34a" opacity="0.6"/>
<rect x="590.4" y="446.3" width="11.3" height="1.6" fill="#f2d34a" opacity="0.45"/>
<rect x="581.0" y="449.6" width="7" height="1.6" fill="#6cbf3a" opacity="0.6"/>
<rect x="590.4" y="449.6" width="11.3" height="1.6" fill="#6cbf3a" opacity="0.45"/>
<rect x="618.0" y="439.0" width="29.0" height="2.6" fill="#e8e8e8" opacity="0.6"/>
<rect x="619.7" y="444.3" width="26.3" height="9.6" fill="none" stroke="#a8a8a8" stroke-width="0.7" rx="0.8"/>
<rect x="621.3" y="446.3" width="7" height="1.6" fill="#f2d34a" opacity="0.6"/>
<rect x="630.7" y="446.3" width="11.3" height="1.6" fill="#f2d34a" opacity="0.45"/>
<rect x="621.3" y="449.6" width="7" height="1.6" fill="#6cbf3a" opacity="0.6"/>
<rect x="630.7" y="449.6" width="11.3" height="1.6" fill="#6cbf3a" opacity="0.45"/>
<rect x="657.0" y="439.0" width="28.0" height="2.6" fill="#e8e8e8" opacity="0.6"/>
<rect x="657.7" y="444.3" width="28.0" height="9.6" fill="none" stroke="#a8a8a8" stroke-width="0.7" rx="0.8"/>
<rect x="659.3" y="446.3" width="7" height="1.6" fill="#f2d34a" opacity="0.6"/>
<rect x="668.7" y="446.3" width="13.0" height="1.6" fill="#f2d34a" opacity="0.45"/>
<rect x="659.3" y="449.6" width="7" height="1.6" fill="#6cbf3a" opacity="0.6"/>
<rect x="668.7" y="449.6" width="13.0" height="1.6" fill="#6cbf3a" opacity="0.45"/>
<rect x="707.8" y="439.0" width="29.7" height="2.6" fill="#e8e8e8" opacity="0.6"/>
<rect x="707.8" y="444.3" width="29.7" height="9.6" fill="none" stroke="#a8a8a8" stroke-width="0.7" rx="0.8"/>
<rect x="709.4" y="446.3" width="7" height="1.6" fill="#f2d34a" opacity="0.6"/>
<rect x="718.8" y="446.3" width="14.7" height="1.6" fill="#f2d34a" opacity="0.45"/>
<rect x="709.4" y="449.6" width="7" height="1.6" fill="#6cbf3a" opacity="0.6"/>
<rect x="718.8" y="449.6" width="14.7" height="1.6" fill="#6cbf3a" opacity="0.45"/>
<rect x="755.0" y="439.0" width="29.8" height="2.6" fill="#e8e8e8" opacity="0.6"/>
<rect x="756.8" y="444.3" width="28.0" height="9.6" fill="none" stroke="#a8a8a8" stroke-width="0.7" rx="0.8"/>
<rect x="758.4" y="446.3" width="7" height="1.6" fill="#f2d34a" opacity="0.6"/>
<rect x="767.8" y="446.3" width="13.0" height="1.6" fill="#f2d34a" opacity="0.45"/>
<rect x="758.4" y="449.6" width="7" height="1.6" fill="#6cbf3a" opacity="0.6"/>
<rect x="767.8" y="449.6" width="13.0" height="1.6" fill="#6cbf3a" opacity="0.45"/>
<rect x="804.0" y="439.0" width="29.8" height="2.6" fill="#e8e8e8" opacity="0.6"/>
<rect x="805.7" y="444.3" width="28.1" height="9.6" fill="none" stroke="#a8a8a8" stroke-width="0.7" rx="0.8"/>
<rect x="807.3" y="446.3" width="7" height="1.6" fill="#f2d34a" opacity="0.6"/>
<rect x="816.7" y="446.3" width="13.1" height="1.6" fill="#f2d34a" opacity="0.45"/>
<rect x="807.3" y="449.6" width="7" height="1.6" fill="#6cbf3a" opacity="0.6"/>
<rect x="816.7" y="449.6" width="13.1" height="1.6" fill="#6cbf3a" opacity="0.45"/>
<rect x="843.0" y="439.0" width="28.0" height="2.6" fill="#e8e8e8" opacity="0.6"/>
<rect x="843.2" y="444.3" width="28.0" height="9.6" fill="none" stroke="#a8a8a8" stroke-width="0.7" rx="0.8"/>
<rect x="844.8" y="446.3" width="7" height="1.6" fill="#f2d34a" opacity="0.6"/>
<rect x="854.2" y="446.3" width="13.0" height="1.6" fill="#f2d34a" opacity="0.45"/>
<rect x="844.8" y="449.6" width="7" height="1.6" fill="#6cbf3a" opacity="0.6"/>
<rect x="854.2" y="449.6" width="13.0" height="1.6" fill="#6cbf3a" opacity="0.45"/>
<rect x="884.5" y="439.0" width="26.3" height="2.6" fill="#e8e8e8" opacity="0.6"/>
<rect x="883.8" y="444.3" width="27.0" height="9.6" fill="none" stroke="#a8a8a8" stroke-width="0.7" rx="0.8"/>
<rect x="885.4" y="446.3" width="7" height="1.6" fill="#f2d34a" opacity="0.6"/>
<rect x="894.8" y="446.3" width="12.0" height="1.6" fill="#f2d34a" opacity="0.45"/>
<rect x="885.4" y="449.6" width="7" height="1.6" fill="#6cbf3a" opacity="0.6"/>
<rect x="894.8" y="449.6" width="12.0" height="1.6" fill="#6cbf3a" opacity="0.45"/>
<rect x="932.8" y="439.0" width="28.7" height="2.6" fill="#e8e8e8" opacity="0.6"/>
<rect x="932.8" y="444.3" width="28.7" height="9.6" fill="none" stroke="#a8a8a8" stroke-width="0.7" rx="0.8"/>
<rect x="934.4" y="446.3" width="7" height="1.6" fill="#f2d34a" opacity="0.6"/>
<rect x="943.8" y="446.3" width="13.7" height="1.6" fill="#f2d34a" opacity="0.45"/>
<rect x="934.4" y="449.6" width="7" height="1.6" fill="#6cbf3a" opacity="0.6"/>
<rect x="943.8" y="449.6" width="13.7" height="1.6" fill="#6cbf3a" opacity="0.45"/>
<rect x="579.2" y="461.9" width="24.6" height="2.6" fill="#e8e8e8" opacity="0.6"/>
<rect x="577.2" y="467.2" width="27.6" height="12.9" fill="none" stroke="#a8a8a8" stroke-width="0.7" rx="0.8"/>
<rect x="578.8" y="469.2" width="7" height="1.6" fill="#f2d34a" opacity="0.6"/>
<rect x="588.2" y="469.2" width="12.6" height="1.6" fill="#f2d34a" opacity="0.45"/>
<rect x="578.8" y="472.5" width="7" height="1.6" fill="#6cbf3a" opacity="0.6"/>
<rect x="588.2" y="472.5" width="12.6" height="1.6" fill="#6cbf3a" opacity="0.45"/>
<rect x="578.8" y="475.8" width="7" height="1.6" fill="#d01818" opacity="0.6"/>
<rect x="588.2" y="475.8" width="12.6" height="1.6" fill="#d01818" opacity="0.45"/>
<rect x="758.8" y="461.9" width="25.0" height="2.6" fill="#e8e8e8" opacity="0.6"/>
<rect x="756.8" y="467.2" width="28.0" height="12.9" fill="none" stroke="#a8a8a8" stroke-width="0.7" rx="0.8"/>
<rect x="758.4" y="469.2" width="7" height="1.6" fill="#f2d34a" opacity="0.6"/>
<rect x="767.8" y="469.2" width="13.0" height="1.6" fill="#f2d34a" opacity="0.45"/>
<rect x="758.4" y="472.5" width="7" height="1.6" fill="#6cbf3a" opacity="0.6"/>
<rect x="767.8" y="472.5" width="13.0" height="1.6" fill="#6cbf3a" opacity="0.45"/>
<rect x="758.4" y="475.8" width="7" height="1.6" fill="#d01818" opacity="0.6"/>
<rect x="767.8" y="475.8" width="13.0" height="1.6" fill="#d01818" opacity="0.45"/>
<rect x="807.7" y="461.9" width="25.1" height="2.6" fill="#e8e8e8" opacity="0.6"/>
<rect x="805.7" y="467.2" width="28.1" height="12.9" fill="none" stroke="#a8a8a8" stroke-width="0.7" rx="0.8"/>
<rect x="807.3" y="469.2" width="7" height="1.6" fill="#f2d34a" opacity="0.6"/>
<rect x="816.7" y="469.2" width="13.1" height="1.6" fill="#f2d34a" opacity="0.45"/>
<rect x="807.3" y="472.5" width="7" height="1.6" fill="#6cbf3a" opacity="0.6"/>
<rect x="816.7" y="472.5" width="13.1" height="1.6" fill="#6cbf3a" opacity="0.45"/>
<rect x="807.3" y="475.8" width="7" height="1.6" fill="#d01818" opacity="0.6"/>
<rect x="816.7" y="475.8" width="13.1" height="1.6" fill="#d01818" opacity="0.45"/>
</svg><!--/DIAG-->

<svg class="abs" style="left:0;top:0" width="1000" height="724" viewBox="0 0 1000 724">
 <circle cx="899.7" cy="483.5" r="30.6" fill="#f0f4f8"/>
 <path d="M896.1 469.1L917.2 468L913.9 492.2L894.2 490.6Z" fill="#12cfdc"/>
 <path d="M882.3 475.6L903.7 474.5L900.6 498.7L890.6 497.3L891.6 485.6L881.6 485.4Z" fill="#0b6ff6"/>
 <path d="M895.6 474.9L903.7 474.5L903.1 479.6L895.2 480.2Z" fill="#0a55db"/>
 <rect x="977" y="588.2" width="22" height="17.8" rx="2.5" fill="#fff"/>
 <path d="M981 594.4H989M981 597.7H990M981 600.8H990" stroke="#666" stroke-width="0.8"/>
 <circle cx="983.8" cy="594.4" r="1.2" fill="#222"/><circle cx="987.5" cy="597.7" r="1.2" fill="#222"/><circle cx="985" cy="600.8" r="1.2" fill="#222"/>
 <circle cx="1000.5" cy="588.7" r="13.2" fill="#4a8ff0"/>
 <path d="M999.5 583.5L995.5 589L999.5 594.5" fill="none" stroke="#fff" stroke-width="1.6"/>
</svg>
</body></html>
